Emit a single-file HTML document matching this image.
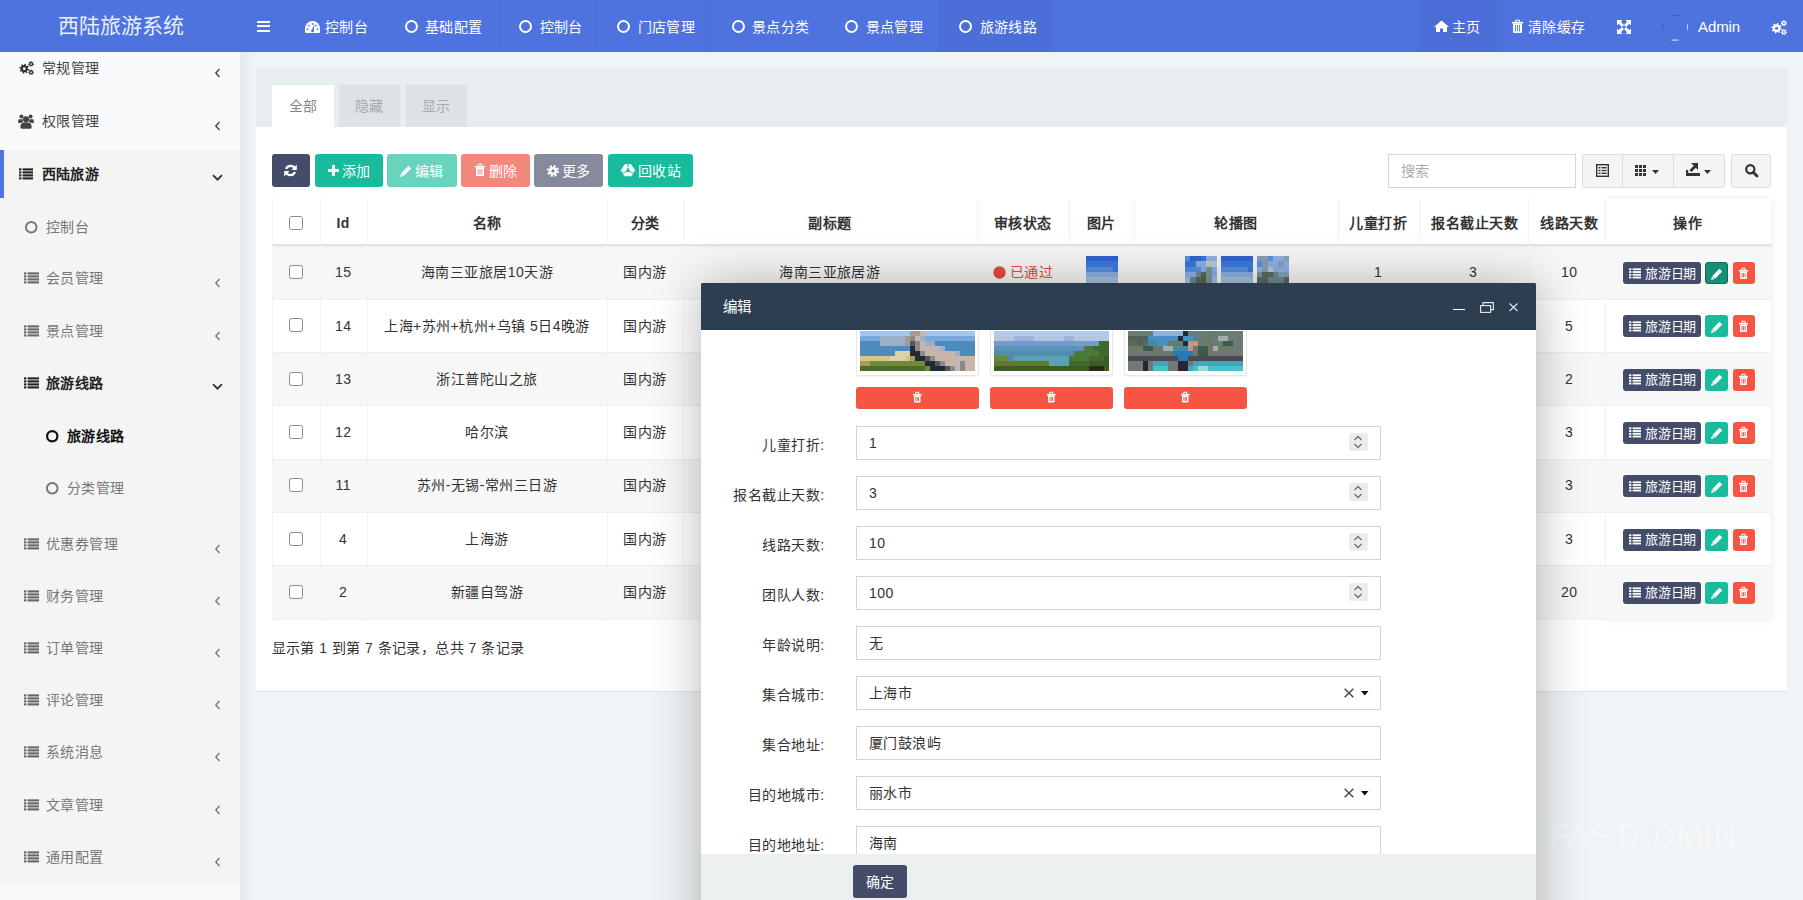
<!DOCTYPE html>
<html lang="zh-CN"><head><meta charset="utf-8">
<style>
*{box-sizing:border-box}
html,body{margin:0;padding:0}
body{width:1803px;height:900px;overflow:hidden;position:relative;background:#f1f4f6;font-family:"Liberation Sans",sans-serif;font-size:14.5px;color:#333}
.a{position:absolute}
.t{position:absolute;white-space:nowrap;letter-spacing:0.45px}
svg{position:absolute;display:block;overflow:visible}
</style></head><body>
<div class="a" style="left:0px;top:0px;width:1803.00px;height:52.00px;background:#4e73df"></div>
<div class="t" style="left:57.5px;top:13.3px;font-size:21px;line-height:25px;color:#e9eefb;font-weight:normal;letter-spacing:0.1px">西陆旅游系统</div>
<div class="a" style="left:257px;top:21px;width:13.00px;height:2.20px;background:#fff"></div>
<div class="a" style="left:257px;top:25.2px;width:13.00px;height:2.20px;background:#fff"></div>
<div class="a" style="left:257px;top:29.5px;width:13.00px;height:2.20px;background:#fff"></div>
<div class="a" style="left:939px;top:0px;width:113.00px;height:52.00px;background:rgba(0,0,0,.035)"></div>
<div class="a" style="left:385px;top:0px;width:1.00px;height:52.00px;background:rgba(0,0,0,.04)"></div>
<div class="a" style="left:500px;top:0px;width:1.00px;height:52.00px;background:rgba(0,0,0,.04)"></div>
<div class="a" style="left:596px;top:0px;width:1.00px;height:52.00px;background:rgba(0,0,0,.04)"></div>
<div class="a" style="left:711px;top:0px;width:1.00px;height:52.00px;background:rgba(0,0,0,.04)"></div>
<div class="a" style="left:825px;top:0px;width:1.00px;height:52.00px;background:rgba(0,0,0,.04)"></div>
<div class="a" style="left:939px;top:0px;width:1.00px;height:52.00px;background:rgba(0,0,0,.04)"></div>
<div class="a" style="left:1052px;top:0px;width:1.00px;height:52.00px;background:rgba(0,0,0,.04)"></div>
<svg style="left:304.7px;top:21.3px" width="15" height="12" viewBox="0 0 15 12"><path d="M0 11 L0 7.5 A7.5 7.5 0 0 1 15 7.5 L15 11 Q15 12 14 12 L1 12 Q0 12 0 11 Z" fill="#fff"/><path d="M6.6 9.6 L9.6 2.8 L8.6 10.2 Z" fill="#4e73df"/><circle cx="7.6" cy="9.8" r="1.5" fill="#4e73df"/><circle cx="2.6" cy="8.2" r="0.9" fill="#4e73df"/><circle cx="4" cy="4.6" r="0.9" fill="#4e73df"/><circle cx="7.5" cy="3" r="0.9" fill="#4e73df"/><circle cx="12.4" cy="8.2" r="0.9" fill="#4e73df"/><circle cx="11" cy="4.6" r="0.9" fill="#4e73df"/></svg>
<div class="t" style="left:325px;top:18.6px;font-size:14px;line-height:17px;color:#fff;font-weight:normal;">控制台</div>
<svg style="left:404.5px;top:20px" width="13" height="13" viewBox="0 0 13 13"><circle cx="6.5" cy="6.5" r="5.5" fill="none" stroke="#fff" stroke-width="2"/></svg>
<div class="t" style="left:425.0px;top:18.6px;font-size:14px;line-height:17px;color:#fff;font-weight:normal;">基础配置</div>
<svg style="left:519px;top:20px" width="13" height="13" viewBox="0 0 13 13"><circle cx="6.5" cy="6.5" r="5.5" fill="none" stroke="#fff" stroke-width="2"/></svg>
<div class="t" style="left:539.5px;top:18.6px;font-size:14px;line-height:17px;color:#fff;font-weight:normal;">控制台</div>
<svg style="left:617px;top:20px" width="13" height="13" viewBox="0 0 13 13"><circle cx="6.5" cy="6.5" r="5.5" fill="none" stroke="#fff" stroke-width="2"/></svg>
<div class="t" style="left:637.5px;top:18.6px;font-size:14px;line-height:17px;color:#fff;font-weight:normal;">门店管理</div>
<svg style="left:731.5px;top:20px" width="13" height="13" viewBox="0 0 13 13"><circle cx="6.5" cy="6.5" r="5.5" fill="none" stroke="#fff" stroke-width="2"/></svg>
<div class="t" style="left:752.0px;top:18.6px;font-size:14px;line-height:17px;color:#fff;font-weight:normal;">景点分类</div>
<svg style="left:845px;top:20px" width="13" height="13" viewBox="0 0 13 13"><circle cx="6.5" cy="6.5" r="5.5" fill="none" stroke="#fff" stroke-width="2"/></svg>
<div class="t" style="left:865.5px;top:18.6px;font-size:14px;line-height:17px;color:#fff;font-weight:normal;">景点管理</div>
<svg style="left:959px;top:20px" width="13" height="13" viewBox="0 0 13 13"><circle cx="6.5" cy="6.5" r="5.5" fill="none" stroke="#fff" stroke-width="2"/></svg>
<div class="t" style="left:979.5px;top:18.6px;font-size:14px;line-height:17px;color:#fff;font-weight:normal;">旅游线路</div>
<div class="a" style="left:1419px;top:0px;width:78.00px;height:52.00px;background:rgba(0,0,0,.045)"></div>
<svg style="left:1434px;top:20px" width="15" height="12" viewBox="0 0 15 12"><path d="M7.5 0.5 L15 7 L13 7 L13 12 L9 12 L9 8.5 L6 8.5 L6 12 L2 12 L2 7 L0 7 Z" fill="#fff"/></svg>
<div class="t" style="left:1452px;top:18.6px;font-size:14px;line-height:17px;color:#fff;font-weight:normal;">主页</div>
<svg style="left:1512px;top:20px" width="11" height="13" viewBox="0 0 11 13"><path d="M3.30 2 L3.96 0.3 L7.04 0.3 L7.70 2" fill="none" stroke="#fff" stroke-width="1.1"/><rect x="0" y="1.9" width="11" height="1.6" fill="#fff"/><path d="M1 3.5 L10 3.5 L10 12 Q10 13 9 13 L2 13 Q1 13 1 12 Z" fill="#fff"/><rect x="2.98" y="5" width="0.9" height="6.50" fill="#4e73df"/><rect x="5.05" y="5" width="0.9" height="6.50" fill="#4e73df"/><rect x="7.12" y="5" width="0.9" height="6.50" fill="#4e73df"/></svg>
<div class="t" style="left:1528px;top:18.6px;font-size:14px;line-height:17px;color:#fff;font-weight:normal;">清除缓存</div>
<svg style="left:1617px;top:20px" width="14" height="13" viewBox="0 0 14 13"><path d="M0 0 L5.5 0 L3.8 1.7 L7 4.9 L4.9 7 L1.7 3.8 L0 5.5 Z" fill="#fff"/><path d="M14 0 L14 5.5 L12.3 3.8 L9.1 7 L7 4.9 L10.2 1.7 L8.5 0 Z" fill="#fff"/><path d="M0 14 L0 8.5 L1.7 10.2 L4.9 7 L7 9.1 L3.8 12.3 L5.5 14 Z" fill="#fff"/><path d="M14 14 L8.5 14 L10.2 12.3 L7 9.1 L9.1 7 L12.3 10.2 L14 8.5 Z" fill="#fff"/></svg>
<svg style="left:1662px;top:14px" width="26" height="27" viewBox="0 0 26 27"><rect x="9.5" y="1" width="7" height="1" fill="#3d5cb8"/><rect x="9.5" y="25.5" width="7" height="1.2" fill="#c9d5f6"/><rect x="0.5" y="10" width="1" height="6" fill="#3d5cb8"/><rect x="25" y="10" width="1" height="6" fill="#b9c9f3"/></svg>
<div class="t" style="left:1698px;top:18.1px;font-size:15px;line-height:18px;color:#fff;font-weight:normal;letter-spacing:-0.1px">Admin</div>
<svg style="left:1771px;top:19.5px" width="16" height="15" viewBox="0 0 16 15"><path d="M9.50 8.20 L10.88 8.70 L10.57 10.03 L9.12 9.89 L8.36 10.96 L8.98 12.28 L7.82 13.01 L6.89 11.88 L5.60 12.10 L5.10 13.48 L3.77 13.17 L3.91 11.72 L2.84 10.96 L1.52 11.58 L0.79 10.42 L1.92 9.49 L1.70 8.20 L0.32 7.70 L0.63 6.37 L2.08 6.51 L2.84 5.44 L2.22 4.12 L3.38 3.39 L4.31 4.52 L5.60 4.30 L6.10 2.92 L7.43 3.23 L7.29 4.68 L8.36 5.44 L9.68 4.82 L10.41 5.98 L9.28 6.91 Z" fill="#fff"/><circle cx="5.60" cy="8.20" r="1.50" fill="#4e73df"/><path d="M15.10 3.20 L15.98 3.53 L15.75 4.42 L14.82 4.28 L14.27 4.92 L14.56 5.82 L13.72 6.19 L13.25 5.37 L12.41 5.34 L11.89 6.13 L11.08 5.71 L11.42 4.83 L10.92 4.15 L9.98 4.24 L9.80 3.34 L10.70 3.06 L10.92 2.25 L10.27 1.56 L10.86 0.87 L11.64 1.40 L12.41 1.06 L12.54 0.12 L13.45 0.15 L13.52 1.09 L14.27 1.48 L15.08 1.00 L15.63 1.73 L14.94 2.37 Z" fill="#fff"/><circle cx="12.90" cy="3.20" r="0.90" fill="#4e73df"/><path d="M15.10 12.00 L15.98 12.33 L15.75 13.22 L14.82 13.08 L14.27 13.72 L14.56 14.62 L13.72 14.99 L13.25 14.17 L12.41 14.14 L11.89 14.93 L11.08 14.51 L11.42 13.63 L10.92 12.95 L9.98 13.04 L9.80 12.14 L10.70 11.86 L10.92 11.05 L10.27 10.36 L10.86 9.67 L11.64 10.20 L12.41 9.86 L12.54 8.92 L13.45 8.95 L13.52 9.89 L14.27 10.28 L15.08 9.80 L15.63 10.53 L14.94 11.17 Z" fill="#fff"/><circle cx="12.90" cy="12.00" r="0.90" fill="#4e73df"/></svg>
<div class="a" style="left:0px;top:52px;width:240.00px;height:848.00px;background:#f9fafc"></div>
<div class="a" style="left:0px;top:150px;width:240.00px;height:735.00px;background:#f4f4f5"></div>
<div class="a" style="left:0px;top:150px;width:3.50px;height:48.00px;background:#4e73df"></div>
<svg style="left:18.5px;top:61px" width="15" height="14" viewBox="0 0 15 14"><path d="M8.91 7.69 L10.20 8.16 L9.91 9.41 L8.55 9.27 L7.84 10.27 L8.42 11.52 L7.33 12.20 L6.46 11.14 L5.25 11.34 L4.78 12.63 L3.53 12.35 L3.67 10.98 L2.66 10.27 L1.42 10.85 L0.74 9.77 L1.80 8.90 L1.59 7.69 L0.30 7.22 L0.59 5.97 L1.95 6.10 L2.66 5.10 L2.08 3.86 L3.17 3.18 L4.04 4.24 L5.25 4.03 L5.72 2.74 L6.97 3.03 L6.83 4.39 L7.84 5.10 L9.08 4.52 L9.76 5.61 L8.70 6.48 Z" fill="#333"/><circle cx="5.25" cy="7.69" r="1.41" fill="#f9fafc"/><path d="M14.16 3.00 L14.98 3.31 L14.77 4.14 L13.89 4.01 L13.38 4.61 L13.65 5.45 L12.87 5.80 L12.43 5.04 L11.63 5.01 L11.15 5.75 L10.39 5.35 L10.71 4.53 L10.24 3.89 L9.35 3.97 L9.19 3.13 L10.04 2.87 L10.24 2.11 L9.63 1.46 L10.18 0.81 L10.91 1.31 L11.63 0.99 L11.76 0.11 L12.61 0.14 L12.68 1.02 L13.38 1.39 L14.14 0.94 L14.65 1.62 L14.00 2.22 Z" fill="#333"/><circle cx="12.09" cy="3.00" r="0.84" fill="#f9fafc"/><path d="M14.16 11.25 L14.98 11.56 L14.77 12.39 L13.89 12.26 L13.38 12.86 L13.65 13.70 L12.87 14.05 L12.43 13.29 L11.63 13.26 L11.15 14.00 L10.39 13.60 L10.71 12.78 L10.24 12.14 L9.35 12.22 L9.19 11.38 L10.04 11.12 L10.24 10.36 L9.63 9.71 L10.18 9.06 L10.91 9.56 L11.63 9.24 L11.76 8.36 L12.61 8.39 L12.68 9.27 L13.38 9.64 L14.14 9.19 L14.65 9.87 L14.00 10.47 Z" fill="#333"/><circle cx="12.09" cy="11.25" r="0.84" fill="#f9fafc"/></svg>
<div class="t" style="left:42px;top:60.1px;font-size:14px;line-height:17px;color:#444;font-weight:normal;">常规管理</div>
<svg style="left:214px;top:68px" width="7" height="10" viewBox="0 0 7 10"><path d="M5.5 1 L1.8 5.0 L5.5 9" fill="none" stroke="#444" stroke-width="1.4"/></svg>
<svg style="left:18px;top:113.5px" width="16" height="15" viewBox="0 0 16 15"><circle cx="8" cy="5.3" r="3.1" fill="#444"/><path d="M2.4 13.2 Q2.4 8.6 6 8.6 L10 8.6 Q13.6 8.6 13.6 13.2 Q13.6 14.8 12 14.8 L4 14.8 Q2.4 14.8 2.4 13.2 Z" fill="#444"/><circle cx="3.4" cy="2.6" r="2" fill="#444"/><circle cx="12.6" cy="2.6" r="2" fill="#444"/><path d="M0.2 9 L0.2 6.4 Q0.2 5.3 1.3 5.3 L4.6 5.3 Q4.4 6.6 5.2 8 Q3.4 8.4 2.6 9 Z" fill="#444"/><path d="M15.8 9 L15.8 6.4 Q15.8 5.3 14.7 5.3 L11.4 5.3 Q11.6 6.6 10.8 8 Q12.6 8.4 13.4 9 Z" fill="#444"/></svg>
<div class="t" style="left:42px;top:113.1px;font-size:14px;line-height:17px;color:#444;font-weight:normal;">权限管理</div>
<svg style="left:214px;top:121px" width="7" height="10" viewBox="0 0 7 10"><path d="M5.5 1 L1.8 5.0 L5.5 9" fill="none" stroke="#444" stroke-width="1.4"/></svg>
<svg style="left:19px;top:168px" width="14" height="12" viewBox="0 0 14 12"><rect x="0" y="0.35" width="2.4" height="2.10" fill="#222"/><rect x="3.6" y="0.35" width="10.4" height="2.10" fill="#222"/><rect x="0" y="3.35" width="2.4" height="2.10" fill="#222"/><rect x="3.6" y="3.35" width="10.4" height="2.10" fill="#222"/><rect x="0" y="6.35" width="2.4" height="2.10" fill="#222"/><rect x="3.6" y="6.35" width="10.4" height="2.10" fill="#222"/><rect x="0" y="9.35" width="2.4" height="2.10" fill="#222"/><rect x="3.6" y="9.35" width="10.4" height="2.10" fill="#222"/></svg>
<div class="t" style="left:41.5px;top:166.1px;font-size:14px;line-height:17px;color:#222;font-weight:bold;">西陆旅游</div>
<svg style="left:212px;top:174px" width="11" height="7" viewBox="0 0 11 7"><path d="M1 1.2 L5.5 5.7 L10 1.2" fill="none" stroke="#333" stroke-width="1.8"/></svg>
<svg style="left:25px;top:221px" width="12.5" height="12.5" viewBox="0 0 12.5 12.5"><circle cx="6.25" cy="6.25" r="5.3" fill="none" stroke="#777" stroke-width="1.9"/></svg>
<div class="t" style="left:46px;top:218.6px;font-size:14px;line-height:17px;color:#777;font-weight:normal;">控制台</div>
<svg style="left:24px;top:272px" width="15" height="12" viewBox="0 0 15 12"><rect x="0" y="0.35" width="2.4" height="2.10" fill="#666"/><rect x="3.6" y="0.35" width="11.4" height="2.10" fill="#666"/><rect x="0" y="3.35" width="2.4" height="2.10" fill="#666"/><rect x="3.6" y="3.35" width="11.4" height="2.10" fill="#666"/><rect x="0" y="6.35" width="2.4" height="2.10" fill="#666"/><rect x="3.6" y="6.35" width="11.4" height="2.10" fill="#666"/><rect x="0" y="9.35" width="2.4" height="2.10" fill="#666"/><rect x="3.6" y="9.35" width="11.4" height="2.10" fill="#666"/></svg>
<div class="t" style="left:46px;top:270.1px;font-size:14px;line-height:17px;color:#777;font-weight:normal;">会员管理</div>
<svg style="left:214px;top:278px" width="7" height="10" viewBox="0 0 7 10"><path d="M5.5 1 L1.8 5.0 L5.5 9" fill="none" stroke="#777" stroke-width="1.4"/></svg>
<svg style="left:24px;top:324.5px" width="15" height="12" viewBox="0 0 15 12"><rect x="0" y="0.35" width="2.4" height="2.10" fill="#666"/><rect x="3.6" y="0.35" width="11.4" height="2.10" fill="#666"/><rect x="0" y="3.35" width="2.4" height="2.10" fill="#666"/><rect x="3.6" y="3.35" width="11.4" height="2.10" fill="#666"/><rect x="0" y="6.35" width="2.4" height="2.10" fill="#666"/><rect x="3.6" y="6.35" width="11.4" height="2.10" fill="#666"/><rect x="0" y="9.35" width="2.4" height="2.10" fill="#666"/><rect x="3.6" y="9.35" width="11.4" height="2.10" fill="#666"/></svg>
<div class="t" style="left:46px;top:322.6px;font-size:14px;line-height:17px;color:#777;font-weight:normal;">景点管理</div>
<svg style="left:214px;top:330.5px" width="7" height="10" viewBox="0 0 7 10"><path d="M5.5 1 L1.8 5.0 L5.5 9" fill="none" stroke="#777" stroke-width="1.4"/></svg>
<svg style="left:24px;top:377px" width="15" height="12" viewBox="0 0 15 12"><rect x="0" y="0.35" width="2.4" height="2.10" fill="#222"/><rect x="3.6" y="0.35" width="11.4" height="2.10" fill="#222"/><rect x="0" y="3.35" width="2.4" height="2.10" fill="#222"/><rect x="3.6" y="3.35" width="11.4" height="2.10" fill="#222"/><rect x="0" y="6.35" width="2.4" height="2.10" fill="#222"/><rect x="3.6" y="6.35" width="11.4" height="2.10" fill="#222"/><rect x="0" y="9.35" width="2.4" height="2.10" fill="#222"/><rect x="3.6" y="9.35" width="11.4" height="2.10" fill="#222"/></svg>
<div class="t" style="left:46px;top:375.1px;font-size:14px;line-height:17px;color:#222;font-weight:bold;">旅游线路</div>
<svg style="left:212px;top:383px" width="11" height="7" viewBox="0 0 11 7"><path d="M1 1.2 L5.5 5.7 L10 1.2" fill="none" stroke="#333" stroke-width="1.8"/></svg>
<svg style="left:46px;top:429.5px" width="12.5" height="12.5" viewBox="0 0 12.5 12.5"><circle cx="6.25" cy="6.25" r="5.15" fill="none" stroke="#111" stroke-width="2.2"/></svg>
<div class="t" style="left:67px;top:427.6px;font-size:14px;line-height:17px;color:#111;font-weight:bold;">旅游线路</div>
<svg style="left:46px;top:481.5px" width="12.5" height="12.5" viewBox="0 0 12.5 12.5"><circle cx="6.25" cy="6.25" r="5.3" fill="none" stroke="#777" stroke-width="1.9"/></svg>
<div class="t" style="left:67px;top:479.6px;font-size:14px;line-height:17px;color:#777;font-weight:normal;">分类管理</div>
<svg style="left:24px;top:537.5px" width="15" height="12" viewBox="0 0 15 12"><rect x="0" y="0.35" width="2.4" height="2.10" fill="#666"/><rect x="3.6" y="0.35" width="11.4" height="2.10" fill="#666"/><rect x="0" y="3.35" width="2.4" height="2.10" fill="#666"/><rect x="3.6" y="3.35" width="11.4" height="2.10" fill="#666"/><rect x="0" y="6.35" width="2.4" height="2.10" fill="#666"/><rect x="3.6" y="6.35" width="11.4" height="2.10" fill="#666"/><rect x="0" y="9.35" width="2.4" height="2.10" fill="#666"/><rect x="3.6" y="9.35" width="11.4" height="2.10" fill="#666"/></svg>
<div class="t" style="left:46px;top:535.6px;font-size:14px;line-height:17px;color:#777;font-weight:normal;">优惠券管理</div>
<svg style="left:214px;top:543.5px" width="7" height="10" viewBox="0 0 7 10"><path d="M5.5 1 L1.8 5.0 L5.5 9" fill="none" stroke="#777" stroke-width="1.4"/></svg>
<svg style="left:24px;top:589.5px" width="15" height="12" viewBox="0 0 15 12"><rect x="0" y="0.35" width="2.4" height="2.10" fill="#666"/><rect x="3.6" y="0.35" width="11.4" height="2.10" fill="#666"/><rect x="0" y="3.35" width="2.4" height="2.10" fill="#666"/><rect x="3.6" y="3.35" width="11.4" height="2.10" fill="#666"/><rect x="0" y="6.35" width="2.4" height="2.10" fill="#666"/><rect x="3.6" y="6.35" width="11.4" height="2.10" fill="#666"/><rect x="0" y="9.35" width="2.4" height="2.10" fill="#666"/><rect x="3.6" y="9.35" width="11.4" height="2.10" fill="#666"/></svg>
<div class="t" style="left:46px;top:587.6px;font-size:14px;line-height:17px;color:#777;font-weight:normal;">财务管理</div>
<svg style="left:214px;top:595.5px" width="7" height="10" viewBox="0 0 7 10"><path d="M5.5 1 L1.8 5.0 L5.5 9" fill="none" stroke="#777" stroke-width="1.4"/></svg>
<svg style="left:24px;top:641.5px" width="15" height="12" viewBox="0 0 15 12"><rect x="0" y="0.35" width="2.4" height="2.10" fill="#666"/><rect x="3.6" y="0.35" width="11.4" height="2.10" fill="#666"/><rect x="0" y="3.35" width="2.4" height="2.10" fill="#666"/><rect x="3.6" y="3.35" width="11.4" height="2.10" fill="#666"/><rect x="0" y="6.35" width="2.4" height="2.10" fill="#666"/><rect x="3.6" y="6.35" width="11.4" height="2.10" fill="#666"/><rect x="0" y="9.35" width="2.4" height="2.10" fill="#666"/><rect x="3.6" y="9.35" width="11.4" height="2.10" fill="#666"/></svg>
<div class="t" style="left:46px;top:639.6px;font-size:14px;line-height:17px;color:#777;font-weight:normal;">订单管理</div>
<svg style="left:214px;top:647.5px" width="7" height="10" viewBox="0 0 7 10"><path d="M5.5 1 L1.8 5.0 L5.5 9" fill="none" stroke="#777" stroke-width="1.4"/></svg>
<svg style="left:24px;top:694px" width="15" height="12" viewBox="0 0 15 12"><rect x="0" y="0.35" width="2.4" height="2.10" fill="#666"/><rect x="3.6" y="0.35" width="11.4" height="2.10" fill="#666"/><rect x="0" y="3.35" width="2.4" height="2.10" fill="#666"/><rect x="3.6" y="3.35" width="11.4" height="2.10" fill="#666"/><rect x="0" y="6.35" width="2.4" height="2.10" fill="#666"/><rect x="3.6" y="6.35" width="11.4" height="2.10" fill="#666"/><rect x="0" y="9.35" width="2.4" height="2.10" fill="#666"/><rect x="3.6" y="9.35" width="11.4" height="2.10" fill="#666"/></svg>
<div class="t" style="left:46px;top:692.1px;font-size:14px;line-height:17px;color:#777;font-weight:normal;">评论管理</div>
<svg style="left:214px;top:700px" width="7" height="10" viewBox="0 0 7 10"><path d="M5.5 1 L1.8 5.0 L5.5 9" fill="none" stroke="#777" stroke-width="1.4"/></svg>
<svg style="left:24px;top:746px" width="15" height="12" viewBox="0 0 15 12"><rect x="0" y="0.35" width="2.4" height="2.10" fill="#666"/><rect x="3.6" y="0.35" width="11.4" height="2.10" fill="#666"/><rect x="0" y="3.35" width="2.4" height="2.10" fill="#666"/><rect x="3.6" y="3.35" width="11.4" height="2.10" fill="#666"/><rect x="0" y="6.35" width="2.4" height="2.10" fill="#666"/><rect x="3.6" y="6.35" width="11.4" height="2.10" fill="#666"/><rect x="0" y="9.35" width="2.4" height="2.10" fill="#666"/><rect x="3.6" y="9.35" width="11.4" height="2.10" fill="#666"/></svg>
<div class="t" style="left:46px;top:744.1px;font-size:14px;line-height:17px;color:#777;font-weight:normal;">系统消息</div>
<svg style="left:214px;top:752px" width="7" height="10" viewBox="0 0 7 10"><path d="M5.5 1 L1.8 5.0 L5.5 9" fill="none" stroke="#777" stroke-width="1.4"/></svg>
<svg style="left:24px;top:798.5px" width="15" height="12" viewBox="0 0 15 12"><rect x="0" y="0.35" width="2.4" height="2.10" fill="#666"/><rect x="3.6" y="0.35" width="11.4" height="2.10" fill="#666"/><rect x="0" y="3.35" width="2.4" height="2.10" fill="#666"/><rect x="3.6" y="3.35" width="11.4" height="2.10" fill="#666"/><rect x="0" y="6.35" width="2.4" height="2.10" fill="#666"/><rect x="3.6" y="6.35" width="11.4" height="2.10" fill="#666"/><rect x="0" y="9.35" width="2.4" height="2.10" fill="#666"/><rect x="3.6" y="9.35" width="11.4" height="2.10" fill="#666"/></svg>
<div class="t" style="left:46px;top:796.6px;font-size:14px;line-height:17px;color:#777;font-weight:normal;">文章管理</div>
<svg style="left:214px;top:804.5px" width="7" height="10" viewBox="0 0 7 10"><path d="M5.5 1 L1.8 5.0 L5.5 9" fill="none" stroke="#777" stroke-width="1.4"/></svg>
<svg style="left:24px;top:850.5px" width="15" height="12" viewBox="0 0 15 12"><rect x="0" y="0.35" width="2.4" height="2.10" fill="#666"/><rect x="3.6" y="0.35" width="11.4" height="2.10" fill="#666"/><rect x="0" y="3.35" width="2.4" height="2.10" fill="#666"/><rect x="3.6" y="3.35" width="11.4" height="2.10" fill="#666"/><rect x="0" y="6.35" width="2.4" height="2.10" fill="#666"/><rect x="3.6" y="6.35" width="11.4" height="2.10" fill="#666"/><rect x="0" y="9.35" width="2.4" height="2.10" fill="#666"/><rect x="3.6" y="9.35" width="11.4" height="2.10" fill="#666"/></svg>
<div class="t" style="left:46px;top:848.6px;font-size:14px;line-height:17px;color:#777;font-weight:normal;">通用配置</div>
<svg style="left:214px;top:856.5px" width="7" height="10" viewBox="0 0 7 10"><path d="M5.5 1 L1.8 5.0 L5.5 9" fill="none" stroke="#777" stroke-width="1.4"/></svg>
<div class="a" style="left:240px;top:52px;width:12.00px;height:848.00px;background:linear-gradient(90deg,#e6eaee,#edf0f4)"></div>
<div class="a" style="left:256px;top:67px;width:1531.00px;height:624.00px;background:#fff;box-shadow:0 1px 1px rgba(0,0,0,.06)"></div>
<div class="a" style="left:256px;top:67px;width:1531.00px;height:60.00px;background:#e8edf0"></div>
<div class="a" style="left:272px;top:85px;width:62.00px;height:43.00px;background:#fff"></div>
<div class="a" style="left:339px;top:85px;width:61.00px;height:42.00px;background:#dde2e7"></div>
<div class="a" style="left:406px;top:85px;width:61.00px;height:42.00px;background:#dde2e7"></div>
<div class="t" style="left:273.0px;width:60px;text-align:center;top:98.1px;font-size:14px;line-height:17px;color:#888;font-weight:normal">全部</div>
<div class="t" style="left:339.5px;width:60px;text-align:center;top:98.1px;font-size:14px;line-height:17px;color:#a5abb2;font-weight:normal">隐藏</div>
<div class="t" style="left:406.5px;width:60px;text-align:center;top:98.1px;font-size:14px;line-height:17px;color:#a5abb2;font-weight:normal">显示</div>
<div class="a" style="left:271.5px;top:153.5px;width:38.50px;height:33.50px;background:#444c69;border-radius:3px"></div>
<svg style="left:284px;top:163.5px" width="13" height="13" viewBox="0 0 13 13"><path d="M11 4.5 A5 5 0 0 0 2 5" fill="none" stroke="#fff" stroke-width="2.2"/><path d="M12.8 0.5 L12.8 6 L7.5 6 Z" fill="#fff"/><path d="M2 8.5 A5 5 0 0 0 11 8" fill="none" stroke="#fff" stroke-width="2.2"/><path d="M0.2 12.5 L0.2 7 L5.5 7 Z" fill="#fff"/></svg>
<div class="a" style="left:314.5px;top:153.5px;width:68.50px;height:33.50px;background:#18bc9c;border-radius:3px"></div>
<svg style="left:327.5px;top:165px" width="11" height="11" viewBox="0 0 11 11"><rect x="0" y="4.0" width="11" height="3" fill="#fff"/><rect x="4.0" y="0" width="3" height="11" fill="#fff"/></svg>
<div class="t" style="left:342px;top:162.6px;font-size:14px;line-height:17px;color:#fff;font-weight:normal;">添加</div>
<div class="a" style="left:387px;top:153.5px;width:70.00px;height:33.50px;background:#69d3be;border-radius:3px"></div>
<svg style="left:400px;top:164.5px" width="12" height="12" viewBox="0 0 12 12"><path d="M8.5 0.8 L11.2 3.5 L4 10.7 L1.3 8 Z" fill="#fff"/><path d="M1 8.6 L3.4 11 L0 12 Z" fill="#fff"/></svg>
<div class="t" style="left:415px;top:162.6px;font-size:14px;line-height:17px;color:#fff;font-weight:normal;">编辑</div>
<div class="a" style="left:461px;top:153.5px;width:69.00px;height:33.50px;background:#f3887c;border-radius:3px"></div>
<svg style="left:474.5px;top:164px" width="10" height="12" viewBox="0 0 10 12"><path d="M3.00 2 L3.60 0.3 L6.40 0.3 L7.00 2" fill="none" stroke="#fff" stroke-width="1.1"/><rect x="0" y="1.9" width="10" height="1.6" fill="#fff"/><path d="M1 3.5 L9 3.5 L9 11 Q9 12 8 12 L2 12 Q1 12 1 11 Z" fill="#fff"/><rect x="2.76" y="5" width="0.9" height="5.50" fill="#f3887c"/><rect x="4.55" y="5" width="0.9" height="5.50" fill="#f3887c"/><rect x="6.34" y="5" width="0.9" height="5.50" fill="#f3887c"/></svg>
<div class="t" style="left:489px;top:162.6px;font-size:14px;line-height:17px;color:#fff;font-weight:normal;">删除</div>
<div class="a" style="left:533.5px;top:153.5px;width:69.50px;height:33.50px;background:#858b9d;border-radius:3px"></div>
<svg style="left:547px;top:164.5px" width="12" height="12" viewBox="0 0 12 12"><circle cx="6" cy="6" r="4.6" fill="none" stroke="#fff" stroke-width="2.8" stroke-dasharray="2 1.6"/><circle cx="6" cy="6" r="4" fill="#fff"/><circle cx="6" cy="6" r="1.7" fill="#858b9d"/></svg>
<div class="t" style="left:562px;top:162.6px;font-size:14px;line-height:17px;color:#fff;font-weight:normal;">更多</div>
<div class="a" style="left:608px;top:153.5px;width:84.50px;height:33.50px;background:#18bc9c;border-radius:3px"></div>
<svg style="left:620.7px;top:164.3px" width="14" height="12" viewBox="0 0 14 12"><path d="M4 0.6 L10 0.6 L13.6 6.2 L10.4 11.8 L3.6 11.8 L0.4 6.2 Z" fill="#fff" stroke="#fff" stroke-width="0.9" stroke-linejoin="round"/><path d="M7 3.2 L9.6 8 L4.4 8 Z" fill="#18bc9c"/><path d="M7 0 L7 3.4 M0.6 9.8 L4.6 7.8 M13.4 9.8 L9.4 7.8" stroke="#18bc9c" stroke-width="1"/></svg>
<div class="t" style="left:638px;top:162.6px;font-size:14px;line-height:17px;color:#fff;font-weight:normal;">回收站</div>
<div class="a" style="left:1387.5px;top:153.5px;width:188.50px;height:34.50px;background:#fff;border:1px solid #d6d6d6"></div>
<div class="t" style="left:1401px;top:163.1px;font-size:14px;line-height:17px;color:#aaa;font-weight:normal;">搜索</div>
<div class="a" style="left:1582px;top:153.5px;width:143.00px;height:34.50px;background:#f4f4f4;border:1px solid #ddd;border-radius:3px"></div>
<div class="a" style="left:1622px;top:154px;width:1.00px;height:33.50px;background:#ddd"></div>
<div class="a" style="left:1673px;top:154px;width:1.00px;height:33.50px;background:#ddd"></div>
<div class="a" style="left:1731px;top:153.5px;width:40.00px;height:34.50px;background:#f4f4f4;border:1px solid #ddd;border-radius:3px"></div>
<svg style="left:1596px;top:164px" width="13" height="13" viewBox="0 0 13 13"><rect x="0.7" y="0.7" width="11.6" height="11.6" fill="none" stroke="#333" stroke-width="1.4"/><rect x="2.5" y="3" width="2" height="1.4" fill="#333"/><rect x="5.5" y="3" width="5" height="1.4" fill="#333"/><rect x="2.5" y="5.8" width="2" height="1.4" fill="#333"/><rect x="5.5" y="5.8" width="5" height="1.4" fill="#333"/><rect x="2.5" y="8.6" width="2" height="1.4" fill="#333"/><rect x="5.5" y="8.6" width="5" height="1.4" fill="#333"/></svg>
<svg style="left:1635px;top:165px" width="11" height="11" viewBox="0 0 11 11"><rect x="0" y="0" width="3" height="3" fill="#333"/><rect x="0" y="4" width="3" height="3" fill="#333"/><rect x="0" y="8" width="3" height="3" fill="#333"/><rect x="4" y="0" width="3" height="3" fill="#333"/><rect x="4" y="4" width="3" height="3" fill="#333"/><rect x="4" y="8" width="3" height="3" fill="#333"/><rect x="8" y="0" width="3" height="3" fill="#333"/><rect x="8" y="4" width="3" height="3" fill="#333"/><rect x="8" y="8" width="3" height="3" fill="#333"/></svg>
<svg style="left:1652px;top:170px" width="7" height="4" viewBox="0 0 7 4"><path d="M0 0 L7 0 L3.5 4 Z" fill="#333"/></svg>
<svg style="left:1686px;top:162px" width="15" height="15" viewBox="0 0 15 15"><path d="M5 1 L12 1 L12 8 L9.8 5.8 L5.5 10 L3.5 8 L7.8 3.8 Z" fill="#333"/><rect x="0" y="11" width="14" height="3" fill="#333"/><rect x="0" y="8" width="2.2" height="4" fill="#333"/></svg>
<svg style="left:1704px;top:170px" width="7" height="4" viewBox="0 0 7 4"><path d="M0 0 L7 0 L3.5 4 Z" fill="#333"/></svg>
<svg style="left:1744.5px;top:164px" width="13" height="13" viewBox="0 0 13 13"><circle cx="5.3" cy="5.3" r="4.1" fill="none" stroke="#333" stroke-width="2.2"/><path d="M8.3 8.3 L12 12" stroke="#333" stroke-width="2.8" stroke-linecap="round"/></svg>
<div class="a" style="left:1604.5px;top:199px;width:166.50px;height:419.60px;box-shadow:0 0 9px rgba(0,0,0,.09);border-radius:3px;background:#fff"></div>
<div class="a" style="left:271.5px;top:199px;width:1499.50px;height:46.50px;background:#fff"></div>
<div class="a" style="left:271.5px;top:245.5px;width:1499.50px;height:53.30px;background:#f7f7f7"></div>
<div class="a" style="left:271.5px;top:245.5px;width:1499.50px;height:1.00px;background:#eee"></div>
<div class="a" style="left:271.5px;top:298.8px;width:1499.50px;height:53.30px;background:#fff"></div>
<div class="a" style="left:271.5px;top:298.8px;width:1499.50px;height:1.00px;background:#eee"></div>
<div class="a" style="left:271.5px;top:352.1px;width:1499.50px;height:53.30px;background:#f7f7f7"></div>
<div class="a" style="left:271.5px;top:352.1px;width:1499.50px;height:1.00px;background:#eee"></div>
<div class="a" style="left:271.5px;top:405.4px;width:1499.50px;height:53.30px;background:#fff"></div>
<div class="a" style="left:271.5px;top:405.4px;width:1499.50px;height:1.00px;background:#eee"></div>
<div class="a" style="left:271.5px;top:458.7px;width:1499.50px;height:53.30px;background:#f7f7f7"></div>
<div class="a" style="left:271.5px;top:458.7px;width:1499.50px;height:1.00px;background:#eee"></div>
<div class="a" style="left:271.5px;top:512.0px;width:1499.50px;height:53.30px;background:#fff"></div>
<div class="a" style="left:271.5px;top:512.0px;width:1499.50px;height:1.00px;background:#eee"></div>
<div class="a" style="left:271.5px;top:565.3px;width:1499.50px;height:53.30px;background:#f7f7f7"></div>
<div class="a" style="left:271.5px;top:565.3px;width:1499.50px;height:1.00px;background:#eee"></div>
<div class="a" style="left:271.5px;top:244.0px;width:1499.50px;height:2.00px;background:#e4e4e4"></div>
<div class="a" style="left:271.5px;top:618.5999999999999px;width:1499.50px;height:1.00px;background:#f0f0f0"></div>
<div class="a" style="left:271.5px;top:199px;width:1.00px;height:419.60px;background:#f2f2f2"></div>
<div class="a" style="left:319.5px;top:199px;width:1.00px;height:419.60px;background:#f2f2f2"></div>
<div class="a" style="left:367px;top:199px;width:1.00px;height:419.60px;background:#f2f2f2"></div>
<div class="a" style="left:607px;top:199px;width:1.00px;height:419.60px;background:#f2f2f2"></div>
<div class="a" style="left:683px;top:199px;width:1.00px;height:419.60px;background:#f2f2f2"></div>
<div class="a" style="left:976.5px;top:199px;width:1.00px;height:419.60px;background:#f2f2f2"></div>
<div class="a" style="left:1069px;top:199px;width:1.00px;height:419.60px;background:#f2f2f2"></div>
<div class="a" style="left:1133.5px;top:199px;width:1.00px;height:419.60px;background:#f2f2f2"></div>
<div class="a" style="left:1338px;top:199px;width:1.00px;height:419.60px;background:#f2f2f2"></div>
<div class="a" style="left:1418.5px;top:199px;width:1.00px;height:419.60px;background:#f2f2f2"></div>
<div class="a" style="left:1528px;top:199px;width:1.00px;height:419.60px;background:#f2f2f2"></div>
<div class="a" style="left:1604.5px;top:199px;width:1.00px;height:419.60px;background:#f2f2f2"></div>
<div class="t" style="left:243.2px;width:200px;text-align:center;top:214.6px;font-size:14px;line-height:17px;color:#333;font-weight:bold">Id</div>
<div class="t" style="left:387.0px;width:200px;text-align:center;top:214.6px;font-size:14px;line-height:17px;color:#333;font-weight:bold">名称</div>
<div class="t" style="left:545.0px;width:200px;text-align:center;top:214.6px;font-size:14px;line-height:17px;color:#333;font-weight:bold">分类</div>
<div class="t" style="left:729.8px;width:200px;text-align:center;top:214.6px;font-size:14px;line-height:17px;color:#333;font-weight:bold">副标题</div>
<div class="t" style="left:922.8px;width:200px;text-align:center;top:214.6px;font-size:14px;line-height:17px;color:#333;font-weight:bold">审核状态</div>
<div class="t" style="left:1001.2px;width:200px;text-align:center;top:214.6px;font-size:14px;line-height:17px;color:#333;font-weight:bold">图片</div>
<div class="t" style="left:1135.8px;width:200px;text-align:center;top:214.6px;font-size:14px;line-height:17px;color:#333;font-weight:bold">轮播图</div>
<div class="t" style="left:1278.2px;width:200px;text-align:center;top:214.6px;font-size:14px;line-height:17px;color:#333;font-weight:bold">儿童打折</div>
<div class="t" style="left:1374.8px;width:200px;text-align:center;top:214.6px;font-size:14px;line-height:17px;color:#333;font-weight:bold">报名截止天数</div>
<div class="t" style="left:1469.2px;width:200px;text-align:center;top:214.6px;font-size:14px;line-height:17px;color:#333;font-weight:bold">线路天数</div>
<div class="t" style="left:1587.8px;width:200px;text-align:center;top:214.6px;font-size:14px;line-height:17px;color:#333;font-weight:bold">操作</div>
<div class="a" style="left:288.5px;top:215.5px;width:14.00px;height:14.00px;border:1.8px solid #8c8c8c;border-radius:2.5px;background:#fff"></div>
<div class="a" style="left:288.5px;top:265.15px;width:14.00px;height:14.00px;border:1.8px solid #8c8c8c;border-radius:2.5px;background:#fff"></div>
<div class="t" style="left:303.2px;width:80px;text-align:center;top:264.2px;font-size:14px;line-height:17px;color:#333;font-weight:normal">15</div>
<div class="t" style="left:367.0px;width:240px;text-align:center;top:264.2px;font-size:14px;line-height:17px;color:#333;font-weight:normal">海南三亚旅居10天游</div>
<div class="t" style="left:605.0px;width:80px;text-align:center;top:264.2px;font-size:14px;line-height:17px;color:#333;font-weight:normal">国内游</div>
<div class="t" style="left:1529.2px;width:80px;text-align:center;top:264.2px;font-size:14px;line-height:17px;color:#333;font-weight:normal">10</div>
<div class="a" style="left:1622.5px;top:262.0px;width:78.50px;height:22.00px;background:#444c69;border-radius:3px"></div>
<svg style="left:1629px;top:267.5px" width="12" height="11" viewBox="0 0 12 11"><rect x="0" y="0.35" width="2.4" height="1.85" fill="#fff"/><rect x="3.6" y="0.35" width="8.4" height="1.85" fill="#fff"/><rect x="0" y="3.10" width="2.4" height="1.85" fill="#fff"/><rect x="3.6" y="3.10" width="8.4" height="1.85" fill="#fff"/><rect x="0" y="5.85" width="2.4" height="1.85" fill="#fff"/><rect x="3.6" y="5.85" width="8.4" height="1.85" fill="#fff"/><rect x="0" y="8.60" width="2.4" height="1.85" fill="#fff"/><rect x="3.6" y="8.60" width="8.4" height="1.85" fill="#fff"/></svg>
<div class="t" style="left:1645px;top:265.6px;font-size:13px;line-height:16px;color:#fff;font-weight:normal;letter-spacing:-0.2px">旅游日期</div>
<div class="a" style="left:1705px;top:262.0px;width:23.00px;height:22.00px;background:#158f76;border:1px solid #0f6e5a;border-radius:3px"></div>
<svg style="left:1711px;top:267.5px" width="11" height="11" viewBox="0 0 11 11"><path d="M8.5 0.8 L11.2 3.5 L4 10.7 L1.3 8 Z" fill="#fff"/><path d="M1 8.6 L3.4 11 L0 12 Z" fill="#fff"/></svg>
<div class="a" style="left:1732.5px;top:262.0px;width:22.50px;height:22.00px;background:#f75444;border-radius:3px"></div>
<svg style="left:1739px;top:267.5px" width="9" height="11" viewBox="0 0 9 11"><path d="M2.70 2 L3.24 0.3 L5.76 0.3 L6.30 2" fill="none" stroke="#fff" stroke-width="1.1"/><rect x="0" y="1.9" width="9" height="1.6" fill="#fff"/><path d="M1 3.5 L8 3.5 L8 10 Q8 11 7 11 L2 11 Q1 11 1 10 Z" fill="#fff"/><rect x="2.54" y="5" width="0.9" height="4.50" fill="#f75444"/><rect x="4.05" y="5" width="0.9" height="4.50" fill="#f75444"/><rect x="5.56" y="5" width="0.9" height="4.50" fill="#f75444"/></svg>
<div class="a" style="left:288.5px;top:318.45px;width:14.00px;height:14.00px;border:1.8px solid #8c8c8c;border-radius:2.5px;background:#fff"></div>
<div class="t" style="left:303.2px;width:80px;text-align:center;top:317.6px;font-size:14px;line-height:17px;color:#333;font-weight:normal">14</div>
<div class="t" style="left:367.0px;width:240px;text-align:center;top:317.6px;font-size:14px;line-height:17px;color:#333;font-weight:normal">上海+苏州+杭州+乌镇 5日4晚游</div>
<div class="t" style="left:605.0px;width:80px;text-align:center;top:317.6px;font-size:14px;line-height:17px;color:#333;font-weight:normal">国内游</div>
<div class="t" style="left:1529.2px;width:80px;text-align:center;top:317.6px;font-size:14px;line-height:17px;color:#333;font-weight:normal">5</div>
<div class="a" style="left:1622.5px;top:315.3px;width:78.50px;height:22.00px;background:#444c69;border-radius:3px"></div>
<svg style="left:1629px;top:320.8px" width="12" height="11" viewBox="0 0 12 11"><rect x="0" y="0.35" width="2.4" height="1.85" fill="#fff"/><rect x="3.6" y="0.35" width="8.4" height="1.85" fill="#fff"/><rect x="0" y="3.10" width="2.4" height="1.85" fill="#fff"/><rect x="3.6" y="3.10" width="8.4" height="1.85" fill="#fff"/><rect x="0" y="5.85" width="2.4" height="1.85" fill="#fff"/><rect x="3.6" y="5.85" width="8.4" height="1.85" fill="#fff"/><rect x="0" y="8.60" width="2.4" height="1.85" fill="#fff"/><rect x="3.6" y="8.60" width="8.4" height="1.85" fill="#fff"/></svg>
<div class="t" style="left:1645px;top:318.9px;font-size:13px;line-height:16px;color:#fff;font-weight:normal;letter-spacing:-0.2px">旅游日期</div>
<div class="a" style="left:1705px;top:315.3px;width:23.00px;height:22.00px;background:#18bc9c;border-radius:3px"></div>
<svg style="left:1711px;top:320.8px" width="11" height="11" viewBox="0 0 11 11"><path d="M8.5 0.8 L11.2 3.5 L4 10.7 L1.3 8 Z" fill="#fff"/><path d="M1 8.6 L3.4 11 L0 12 Z" fill="#fff"/></svg>
<div class="a" style="left:1732.5px;top:315.3px;width:22.50px;height:22.00px;background:#f75444;border-radius:3px"></div>
<svg style="left:1739px;top:320.8px" width="9" height="11" viewBox="0 0 9 11"><path d="M2.70 2 L3.24 0.3 L5.76 0.3 L6.30 2" fill="none" stroke="#fff" stroke-width="1.1"/><rect x="0" y="1.9" width="9" height="1.6" fill="#fff"/><path d="M1 3.5 L8 3.5 L8 10 Q8 11 7 11 L2 11 Q1 11 1 10 Z" fill="#fff"/><rect x="2.54" y="5" width="0.9" height="4.50" fill="#f75444"/><rect x="4.05" y="5" width="0.9" height="4.50" fill="#f75444"/><rect x="5.56" y="5" width="0.9" height="4.50" fill="#f75444"/></svg>
<div class="a" style="left:288.5px;top:371.75px;width:14.00px;height:14.00px;border:1.8px solid #8c8c8c;border-radius:2.5px;background:#fff"></div>
<div class="t" style="left:303.2px;width:80px;text-align:center;top:370.9px;font-size:14px;line-height:17px;color:#333;font-weight:normal">13</div>
<div class="t" style="left:367.0px;width:240px;text-align:center;top:370.9px;font-size:14px;line-height:17px;color:#333;font-weight:normal">浙江普陀山之旅</div>
<div class="t" style="left:605.0px;width:80px;text-align:center;top:370.9px;font-size:14px;line-height:17px;color:#333;font-weight:normal">国内游</div>
<div class="t" style="left:1529.2px;width:80px;text-align:center;top:370.9px;font-size:14px;line-height:17px;color:#333;font-weight:normal">2</div>
<div class="a" style="left:1622.5px;top:368.6px;width:78.50px;height:22.00px;background:#444c69;border-radius:3px"></div>
<svg style="left:1629px;top:374.1px" width="12" height="11" viewBox="0 0 12 11"><rect x="0" y="0.35" width="2.4" height="1.85" fill="#fff"/><rect x="3.6" y="0.35" width="8.4" height="1.85" fill="#fff"/><rect x="0" y="3.10" width="2.4" height="1.85" fill="#fff"/><rect x="3.6" y="3.10" width="8.4" height="1.85" fill="#fff"/><rect x="0" y="5.85" width="2.4" height="1.85" fill="#fff"/><rect x="3.6" y="5.85" width="8.4" height="1.85" fill="#fff"/><rect x="0" y="8.60" width="2.4" height="1.85" fill="#fff"/><rect x="3.6" y="8.60" width="8.4" height="1.85" fill="#fff"/></svg>
<div class="t" style="left:1645px;top:372.2px;font-size:13px;line-height:16px;color:#fff;font-weight:normal;letter-spacing:-0.2px">旅游日期</div>
<div class="a" style="left:1705px;top:368.6px;width:23.00px;height:22.00px;background:#18bc9c;border-radius:3px"></div>
<svg style="left:1711px;top:374.1px" width="11" height="11" viewBox="0 0 11 11"><path d="M8.5 0.8 L11.2 3.5 L4 10.7 L1.3 8 Z" fill="#fff"/><path d="M1 8.6 L3.4 11 L0 12 Z" fill="#fff"/></svg>
<div class="a" style="left:1732.5px;top:368.6px;width:22.50px;height:22.00px;background:#f75444;border-radius:3px"></div>
<svg style="left:1739px;top:374.1px" width="9" height="11" viewBox="0 0 9 11"><path d="M2.70 2 L3.24 0.3 L5.76 0.3 L6.30 2" fill="none" stroke="#fff" stroke-width="1.1"/><rect x="0" y="1.9" width="9" height="1.6" fill="#fff"/><path d="M1 3.5 L8 3.5 L8 10 Q8 11 7 11 L2 11 Q1 11 1 10 Z" fill="#fff"/><rect x="2.54" y="5" width="0.9" height="4.50" fill="#f75444"/><rect x="4.05" y="5" width="0.9" height="4.50" fill="#f75444"/><rect x="5.56" y="5" width="0.9" height="4.50" fill="#f75444"/></svg>
<div class="a" style="left:288.5px;top:425.04999999999995px;width:14.00px;height:14.00px;border:1.8px solid #8c8c8c;border-radius:2.5px;background:#fff"></div>
<div class="t" style="left:303.2px;width:80px;text-align:center;top:424.1px;font-size:14px;line-height:17px;color:#333;font-weight:normal">12</div>
<div class="t" style="left:367.0px;width:240px;text-align:center;top:424.1px;font-size:14px;line-height:17px;color:#333;font-weight:normal">哈尔滨</div>
<div class="t" style="left:605.0px;width:80px;text-align:center;top:424.1px;font-size:14px;line-height:17px;color:#333;font-weight:normal">国内游</div>
<div class="t" style="left:1529.2px;width:80px;text-align:center;top:424.1px;font-size:14px;line-height:17px;color:#333;font-weight:normal">3</div>
<div class="a" style="left:1622.5px;top:421.9px;width:78.50px;height:22.00px;background:#444c69;border-radius:3px"></div>
<svg style="left:1629px;top:427.4px" width="12" height="11" viewBox="0 0 12 11"><rect x="0" y="0.35" width="2.4" height="1.85" fill="#fff"/><rect x="3.6" y="0.35" width="8.4" height="1.85" fill="#fff"/><rect x="0" y="3.10" width="2.4" height="1.85" fill="#fff"/><rect x="3.6" y="3.10" width="8.4" height="1.85" fill="#fff"/><rect x="0" y="5.85" width="2.4" height="1.85" fill="#fff"/><rect x="3.6" y="5.85" width="8.4" height="1.85" fill="#fff"/><rect x="0" y="8.60" width="2.4" height="1.85" fill="#fff"/><rect x="3.6" y="8.60" width="8.4" height="1.85" fill="#fff"/></svg>
<div class="t" style="left:1645px;top:425.5px;font-size:13px;line-height:16px;color:#fff;font-weight:normal;letter-spacing:-0.2px">旅游日期</div>
<div class="a" style="left:1705px;top:421.9px;width:23.00px;height:22.00px;background:#18bc9c;border-radius:3px"></div>
<svg style="left:1711px;top:427.4px" width="11" height="11" viewBox="0 0 11 11"><path d="M8.5 0.8 L11.2 3.5 L4 10.7 L1.3 8 Z" fill="#fff"/><path d="M1 8.6 L3.4 11 L0 12 Z" fill="#fff"/></svg>
<div class="a" style="left:1732.5px;top:421.9px;width:22.50px;height:22.00px;background:#f75444;border-radius:3px"></div>
<svg style="left:1739px;top:427.4px" width="9" height="11" viewBox="0 0 9 11"><path d="M2.70 2 L3.24 0.3 L5.76 0.3 L6.30 2" fill="none" stroke="#fff" stroke-width="1.1"/><rect x="0" y="1.9" width="9" height="1.6" fill="#fff"/><path d="M1 3.5 L8 3.5 L8 10 Q8 11 7 11 L2 11 Q1 11 1 10 Z" fill="#fff"/><rect x="2.54" y="5" width="0.9" height="4.50" fill="#f75444"/><rect x="4.05" y="5" width="0.9" height="4.50" fill="#f75444"/><rect x="5.56" y="5" width="0.9" height="4.50" fill="#f75444"/></svg>
<div class="a" style="left:288.5px;top:478.34999999999997px;width:14.00px;height:14.00px;border:1.8px solid #8c8c8c;border-radius:2.5px;background:#fff"></div>
<div class="t" style="left:303.2px;width:80px;text-align:center;top:477.4px;font-size:14px;line-height:17px;color:#333;font-weight:normal">11</div>
<div class="t" style="left:367.0px;width:240px;text-align:center;top:477.4px;font-size:14px;line-height:17px;color:#333;font-weight:normal">苏州-无锡-常州三日游</div>
<div class="t" style="left:605.0px;width:80px;text-align:center;top:477.4px;font-size:14px;line-height:17px;color:#333;font-weight:normal">国内游</div>
<div class="t" style="left:1529.2px;width:80px;text-align:center;top:477.4px;font-size:14px;line-height:17px;color:#333;font-weight:normal">3</div>
<div class="a" style="left:1622.5px;top:475.2px;width:78.50px;height:22.00px;background:#444c69;border-radius:3px"></div>
<svg style="left:1629px;top:480.7px" width="12" height="11" viewBox="0 0 12 11"><rect x="0" y="0.35" width="2.4" height="1.85" fill="#fff"/><rect x="3.6" y="0.35" width="8.4" height="1.85" fill="#fff"/><rect x="0" y="3.10" width="2.4" height="1.85" fill="#fff"/><rect x="3.6" y="3.10" width="8.4" height="1.85" fill="#fff"/><rect x="0" y="5.85" width="2.4" height="1.85" fill="#fff"/><rect x="3.6" y="5.85" width="8.4" height="1.85" fill="#fff"/><rect x="0" y="8.60" width="2.4" height="1.85" fill="#fff"/><rect x="3.6" y="8.60" width="8.4" height="1.85" fill="#fff"/></svg>
<div class="t" style="left:1645px;top:478.8px;font-size:13px;line-height:16px;color:#fff;font-weight:normal;letter-spacing:-0.2px">旅游日期</div>
<div class="a" style="left:1705px;top:475.2px;width:23.00px;height:22.00px;background:#18bc9c;border-radius:3px"></div>
<svg style="left:1711px;top:480.7px" width="11" height="11" viewBox="0 0 11 11"><path d="M8.5 0.8 L11.2 3.5 L4 10.7 L1.3 8 Z" fill="#fff"/><path d="M1 8.6 L3.4 11 L0 12 Z" fill="#fff"/></svg>
<div class="a" style="left:1732.5px;top:475.2px;width:22.50px;height:22.00px;background:#f75444;border-radius:3px"></div>
<svg style="left:1739px;top:480.7px" width="9" height="11" viewBox="0 0 9 11"><path d="M2.70 2 L3.24 0.3 L5.76 0.3 L6.30 2" fill="none" stroke="#fff" stroke-width="1.1"/><rect x="0" y="1.9" width="9" height="1.6" fill="#fff"/><path d="M1 3.5 L8 3.5 L8 10 Q8 11 7 11 L2 11 Q1 11 1 10 Z" fill="#fff"/><rect x="2.54" y="5" width="0.9" height="4.50" fill="#f75444"/><rect x="4.05" y="5" width="0.9" height="4.50" fill="#f75444"/><rect x="5.56" y="5" width="0.9" height="4.50" fill="#f75444"/></svg>
<div class="a" style="left:288.5px;top:531.65px;width:14.00px;height:14.00px;border:1.8px solid #8c8c8c;border-radius:2.5px;background:#fff"></div>
<div class="t" style="left:303.2px;width:80px;text-align:center;top:530.8px;font-size:14px;line-height:17px;color:#333;font-weight:normal">4</div>
<div class="t" style="left:367.0px;width:240px;text-align:center;top:530.8px;font-size:14px;line-height:17px;color:#333;font-weight:normal">上海游</div>
<div class="t" style="left:605.0px;width:80px;text-align:center;top:530.8px;font-size:14px;line-height:17px;color:#333;font-weight:normal">国内游</div>
<div class="t" style="left:1529.2px;width:80px;text-align:center;top:530.8px;font-size:14px;line-height:17px;color:#333;font-weight:normal">3</div>
<div class="a" style="left:1622.5px;top:528.5px;width:78.50px;height:22.00px;background:#444c69;border-radius:3px"></div>
<svg style="left:1629px;top:534.0px" width="12" height="11" viewBox="0 0 12 11"><rect x="0" y="0.35" width="2.4" height="1.85" fill="#fff"/><rect x="3.6" y="0.35" width="8.4" height="1.85" fill="#fff"/><rect x="0" y="3.10" width="2.4" height="1.85" fill="#fff"/><rect x="3.6" y="3.10" width="8.4" height="1.85" fill="#fff"/><rect x="0" y="5.85" width="2.4" height="1.85" fill="#fff"/><rect x="3.6" y="5.85" width="8.4" height="1.85" fill="#fff"/><rect x="0" y="8.60" width="2.4" height="1.85" fill="#fff"/><rect x="3.6" y="8.60" width="8.4" height="1.85" fill="#fff"/></svg>
<div class="t" style="left:1645px;top:532.1px;font-size:13px;line-height:16px;color:#fff;font-weight:normal;letter-spacing:-0.2px">旅游日期</div>
<div class="a" style="left:1705px;top:528.5px;width:23.00px;height:22.00px;background:#18bc9c;border-radius:3px"></div>
<svg style="left:1711px;top:534.0px" width="11" height="11" viewBox="0 0 11 11"><path d="M8.5 0.8 L11.2 3.5 L4 10.7 L1.3 8 Z" fill="#fff"/><path d="M1 8.6 L3.4 11 L0 12 Z" fill="#fff"/></svg>
<div class="a" style="left:1732.5px;top:528.5px;width:22.50px;height:22.00px;background:#f75444;border-radius:3px"></div>
<svg style="left:1739px;top:534.0px" width="9" height="11" viewBox="0 0 9 11"><path d="M2.70 2 L3.24 0.3 L5.76 0.3 L6.30 2" fill="none" stroke="#fff" stroke-width="1.1"/><rect x="0" y="1.9" width="9" height="1.6" fill="#fff"/><path d="M1 3.5 L8 3.5 L8 10 Q8 11 7 11 L2 11 Q1 11 1 10 Z" fill="#fff"/><rect x="2.54" y="5" width="0.9" height="4.50" fill="#f75444"/><rect x="4.05" y="5" width="0.9" height="4.50" fill="#f75444"/><rect x="5.56" y="5" width="0.9" height="4.50" fill="#f75444"/></svg>
<div class="a" style="left:288.5px;top:584.9499999999999px;width:14.00px;height:14.00px;border:1.8px solid #8c8c8c;border-radius:2.5px;background:#fff"></div>
<div class="t" style="left:303.2px;width:80px;text-align:center;top:584.0px;font-size:14px;line-height:17px;color:#333;font-weight:normal">2</div>
<div class="t" style="left:367.0px;width:240px;text-align:center;top:584.0px;font-size:14px;line-height:17px;color:#333;font-weight:normal">新疆自驾游</div>
<div class="t" style="left:605.0px;width:80px;text-align:center;top:584.0px;font-size:14px;line-height:17px;color:#333;font-weight:normal">国内游</div>
<div class="t" style="left:1529.2px;width:80px;text-align:center;top:584.0px;font-size:14px;line-height:17px;color:#333;font-weight:normal">20</div>
<div class="a" style="left:1622.5px;top:581.8px;width:78.50px;height:22.00px;background:#444c69;border-radius:3px"></div>
<svg style="left:1629px;top:587.3px" width="12" height="11" viewBox="0 0 12 11"><rect x="0" y="0.35" width="2.4" height="1.85" fill="#fff"/><rect x="3.6" y="0.35" width="8.4" height="1.85" fill="#fff"/><rect x="0" y="3.10" width="2.4" height="1.85" fill="#fff"/><rect x="3.6" y="3.10" width="8.4" height="1.85" fill="#fff"/><rect x="0" y="5.85" width="2.4" height="1.85" fill="#fff"/><rect x="3.6" y="5.85" width="8.4" height="1.85" fill="#fff"/><rect x="0" y="8.60" width="2.4" height="1.85" fill="#fff"/><rect x="3.6" y="8.60" width="8.4" height="1.85" fill="#fff"/></svg>
<div class="t" style="left:1645px;top:585.4px;font-size:13px;line-height:16px;color:#fff;font-weight:normal;letter-spacing:-0.2px">旅游日期</div>
<div class="a" style="left:1705px;top:581.8px;width:23.00px;height:22.00px;background:#18bc9c;border-radius:3px"></div>
<svg style="left:1711px;top:587.3px" width="11" height="11" viewBox="0 0 11 11"><path d="M8.5 0.8 L11.2 3.5 L4 10.7 L1.3 8 Z" fill="#fff"/><path d="M1 8.6 L3.4 11 L0 12 Z" fill="#fff"/></svg>
<div class="a" style="left:1732.5px;top:581.8px;width:22.50px;height:22.00px;background:#f75444;border-radius:3px"></div>
<svg style="left:1739px;top:587.3px" width="9" height="11" viewBox="0 0 9 11"><path d="M2.70 2 L3.24 0.3 L5.76 0.3 L6.30 2" fill="none" stroke="#fff" stroke-width="1.1"/><rect x="0" y="1.9" width="9" height="1.6" fill="#fff"/><path d="M1 3.5 L8 3.5 L8 10 Q8 11 7 11 L2 11 Q1 11 1 10 Z" fill="#fff"/><rect x="2.54" y="5" width="0.9" height="4.50" fill="#f75444"/><rect x="4.05" y="5" width="0.9" height="4.50" fill="#f75444"/><rect x="5.56" y="5" width="0.9" height="4.50" fill="#f75444"/></svg>
<div class="t" style="left:684.8px;width:290px;text-align:center;top:264.2px;font-size:14px;line-height:17px;color:#333;font-weight:normal">海南三亚旅居游</div>
<svg style="left:992.5px;top:265.65px" width="13" height="13" viewBox="0 0 13 13"><circle cx="6.5" cy="6.5" r="6.2" fill="#e74c3c"/></svg>
<div class="t" style="left:1010px;top:264.2px;font-size:14px;line-height:17px;color:#e74c3c;font-weight:normal;">已通过</div>
<div class="t" style="left:1338.2px;width:80px;text-align:center;top:264.2px;font-size:14px;line-height:17px;color:#333;font-weight:normal">1</div>
<div class="t" style="left:1433.2px;width:80px;text-align:center;top:264.2px;font-size:14px;line-height:17px;color:#333;font-weight:normal">3</div>
<svg style="left:1085.5px;top:256px;filter:blur(0.3px)" width="32.00" height="32.00" shape-rendering="crispEdges"><rect x="0.00" y="0.00" width="5.63" height="5.63" fill="#2f63d2"/><rect x="5.33" y="0.00" width="5.63" height="5.63" fill="#2f63d2"/><rect x="10.67" y="0.00" width="5.63" height="5.63" fill="#2f63d2"/><rect x="16.00" y="0.00" width="5.63" height="5.63" fill="#2f63d2"/><rect x="21.33" y="0.00" width="5.63" height="5.63" fill="#2f63d2"/><rect x="26.67" y="0.00" width="5.63" height="5.63" fill="#2f63d2"/><rect x="0.00" y="5.33" width="5.63" height="5.63" fill="#3a78df"/><rect x="5.33" y="5.33" width="5.63" height="5.63" fill="#3a78df"/><rect x="10.67" y="5.33" width="5.63" height="5.63" fill="#3a78df"/><rect x="16.00" y="5.33" width="5.63" height="5.63" fill="#3a78df"/><rect x="21.33" y="5.33" width="5.63" height="5.63" fill="#3a78df"/><rect x="26.67" y="5.33" width="5.63" height="5.63" fill="#3a78df"/><rect x="0.00" y="10.67" width="5.63" height="5.63" fill="#5b8fe0"/><rect x="5.33" y="10.67" width="5.63" height="5.63" fill="#5b8fe0"/><rect x="10.67" y="10.67" width="5.63" height="5.63" fill="#5b8fe0"/><rect x="16.00" y="10.67" width="5.63" height="5.63" fill="#5b8fe0"/><rect x="21.33" y="10.67" width="5.63" height="5.63" fill="#5b8fe0"/><rect x="26.67" y="10.67" width="5.63" height="5.63" fill="#3a78df"/><rect x="0.00" y="16.00" width="5.63" height="5.63" fill="#8db2e6"/><rect x="5.33" y="16.00" width="5.63" height="5.63" fill="#8db2e6"/><rect x="10.67" y="16.00" width="5.63" height="5.63" fill="#8db2e6"/><rect x="16.00" y="16.00" width="5.63" height="5.63" fill="#8db2e6"/><rect x="21.33" y="16.00" width="5.63" height="5.63" fill="#8db2e6"/><rect x="26.67" y="16.00" width="5.63" height="5.63" fill="#8db2e6"/><rect x="0.00" y="21.33" width="5.63" height="5.63" fill="#a9c2de"/><rect x="5.33" y="21.33" width="5.63" height="5.63" fill="#a9c2de"/><rect x="10.67" y="21.33" width="5.63" height="5.63" fill="#a9c2de"/><rect x="16.00" y="21.33" width="5.63" height="5.63" fill="#a9c2de"/><rect x="21.33" y="21.33" width="5.63" height="5.63" fill="#a9c2de"/><rect x="26.67" y="21.33" width="5.63" height="5.63" fill="#a9c2de"/><rect x="0.00" y="26.67" width="5.63" height="5.63" fill="#6d8b92"/><rect x="5.33" y="26.67" width="5.63" height="5.63" fill="#6d8b92"/><rect x="10.67" y="26.67" width="5.63" height="5.63" fill="#6d8b92"/><rect x="16.00" y="26.67" width="5.63" height="5.63" fill="#6d8b92"/><rect x="21.33" y="26.67" width="5.63" height="5.63" fill="#4f6a48"/><rect x="26.67" y="26.67" width="5.63" height="5.63" fill="#4f6a48"/></svg>
<svg style="left:1185px;top:256px;filter:blur(0.3px)" width="32.00" height="32.00" shape-rendering="crispEdges"><rect x="0.00" y="0.00" width="5.63" height="5.63" fill="#5b8fe0"/><rect x="5.33" y="0.00" width="5.63" height="5.63" fill="#2f63d2"/><rect x="10.67" y="0.00" width="5.63" height="5.63" fill="#2f63d2"/><rect x="16.00" y="0.00" width="5.63" height="5.63" fill="#3a78df"/><rect x="21.33" y="0.00" width="5.63" height="5.63" fill="#8db2e6"/><rect x="26.67" y="0.00" width="5.63" height="5.63" fill="#8db2e6"/><rect x="0.00" y="5.33" width="5.63" height="5.63" fill="#3a78df"/><rect x="5.33" y="5.33" width="5.63" height="5.63" fill="#3a78df"/><rect x="10.67" y="5.33" width="5.63" height="5.63" fill="#8db2e6"/><rect x="16.00" y="5.33" width="5.63" height="5.63" fill="#8db2e6"/><rect x="21.33" y="5.33" width="5.63" height="5.63" fill="#c0c8d0"/><rect x="26.67" y="5.33" width="5.63" height="5.63" fill="#c0c8d0"/><rect x="0.00" y="10.67" width="5.63" height="5.63" fill="#5b8fe0"/><rect x="5.33" y="10.67" width="5.63" height="5.63" fill="#5b8fe0"/><rect x="10.67" y="10.67" width="5.63" height="5.63" fill="#5b8fe0"/><rect x="16.00" y="10.67" width="5.63" height="5.63" fill="#8db2e6"/><rect x="21.33" y="10.67" width="5.63" height="5.63" fill="#7a9a9a"/><rect x="26.67" y="10.67" width="5.63" height="5.63" fill="#8db2e6"/><rect x="0.00" y="16.00" width="5.63" height="5.63" fill="#8db2e6"/><rect x="5.33" y="16.00" width="5.63" height="5.63" fill="#8db2e6"/><rect x="10.67" y="16.00" width="5.63" height="5.63" fill="#6d8b92"/><rect x="16.00" y="16.00" width="5.63" height="5.63" fill="#5a6a60"/><rect x="21.33" y="16.00" width="5.63" height="5.63" fill="#7a9a9a"/><rect x="26.67" y="16.00" width="5.63" height="5.63" fill="#8db2e6"/><rect x="0.00" y="21.33" width="5.63" height="5.63" fill="#a9c2de"/><rect x="5.33" y="21.33" width="5.63" height="5.63" fill="#6d8b92"/><rect x="10.67" y="21.33" width="5.63" height="5.63" fill="#5a6a60"/><rect x="16.00" y="21.33" width="5.63" height="5.63" fill="#4f6a48"/><rect x="21.33" y="21.33" width="5.63" height="5.63" fill="#7a9a9a"/><rect x="26.67" y="21.33" width="5.63" height="5.63" fill="#a9c2de"/><rect x="0.00" y="26.67" width="5.63" height="5.63" fill="#6d8b92"/><rect x="5.33" y="26.67" width="5.63" height="5.63" fill="#6d8b92"/><rect x="10.67" y="26.67" width="5.63" height="5.63" fill="#5a6a60"/><rect x="16.00" y="26.67" width="5.63" height="5.63" fill="#4f6a48"/><rect x="21.33" y="26.67" width="5.63" height="5.63" fill="#6d8b92"/><rect x="26.67" y="26.67" width="5.63" height="5.63" fill="#6d8b92"/></svg>
<svg style="left:1221px;top:256px;filter:blur(0.3px)" width="32.00" height="32.00" shape-rendering="crispEdges"><rect x="0.00" y="0.00" width="5.63" height="5.63" fill="#2f63d2"/><rect x="5.33" y="0.00" width="5.63" height="5.63" fill="#2f63d2"/><rect x="10.67" y="0.00" width="5.63" height="5.63" fill="#2f63d2"/><rect x="16.00" y="0.00" width="5.63" height="5.63" fill="#2f63d2"/><rect x="21.33" y="0.00" width="5.63" height="5.63" fill="#2f63d2"/><rect x="26.67" y="0.00" width="5.63" height="5.63" fill="#2f63d2"/><rect x="0.00" y="5.33" width="5.63" height="5.63" fill="#3a78df"/><rect x="5.33" y="5.33" width="5.63" height="5.63" fill="#3a78df"/><rect x="10.67" y="5.33" width="5.63" height="5.63" fill="#3a78df"/><rect x="16.00" y="5.33" width="5.63" height="5.63" fill="#3a78df"/><rect x="21.33" y="5.33" width="5.63" height="5.63" fill="#3a78df"/><rect x="26.67" y="5.33" width="5.63" height="5.63" fill="#3a78df"/><rect x="0.00" y="10.67" width="5.63" height="5.63" fill="#5b8fe0"/><rect x="5.33" y="10.67" width="5.63" height="5.63" fill="#5b8fe0"/><rect x="10.67" y="10.67" width="5.63" height="5.63" fill="#5b8fe0"/><rect x="16.00" y="10.67" width="5.63" height="5.63" fill="#5b8fe0"/><rect x="21.33" y="10.67" width="5.63" height="5.63" fill="#5b8fe0"/><rect x="26.67" y="10.67" width="5.63" height="5.63" fill="#3a78df"/><rect x="0.00" y="16.00" width="5.63" height="5.63" fill="#8db2e6"/><rect x="5.33" y="16.00" width="5.63" height="5.63" fill="#8db2e6"/><rect x="10.67" y="16.00" width="5.63" height="5.63" fill="#8db2e6"/><rect x="16.00" y="16.00" width="5.63" height="5.63" fill="#8db2e6"/><rect x="21.33" y="16.00" width="5.63" height="5.63" fill="#8db2e6"/><rect x="26.67" y="16.00" width="5.63" height="5.63" fill="#8db2e6"/><rect x="0.00" y="21.33" width="5.63" height="5.63" fill="#a9c2de"/><rect x="5.33" y="21.33" width="5.63" height="5.63" fill="#a9c2de"/><rect x="10.67" y="21.33" width="5.63" height="5.63" fill="#a9c2de"/><rect x="16.00" y="21.33" width="5.63" height="5.63" fill="#a9c2de"/><rect x="21.33" y="21.33" width="5.63" height="5.63" fill="#a9c2de"/><rect x="26.67" y="21.33" width="5.63" height="5.63" fill="#a9c2de"/><rect x="0.00" y="26.67" width="5.63" height="5.63" fill="#6d8b92"/><rect x="5.33" y="26.67" width="5.63" height="5.63" fill="#6d8b92"/><rect x="10.67" y="26.67" width="5.63" height="5.63" fill="#6d8b92"/><rect x="16.00" y="26.67" width="5.63" height="5.63" fill="#6d8b92"/><rect x="21.33" y="26.67" width="5.63" height="5.63" fill="#4f6a48"/><rect x="26.67" y="26.67" width="5.63" height="5.63" fill="#4f6a48"/></svg>
<svg style="left:1257px;top:256px;filter:blur(0.3px)" width="32.00" height="32.00" shape-rendering="crispEdges"><rect x="0.00" y="0.00" width="5.63" height="5.63" fill="#8aa0b8"/><rect x="5.33" y="0.00" width="5.63" height="5.63" fill="#8aa0b8"/><rect x="10.67" y="0.00" width="5.63" height="5.63" fill="#5b8fe0"/><rect x="16.00" y="0.00" width="5.63" height="5.63" fill="#8db2e6"/><rect x="21.33" y="0.00" width="5.63" height="5.63" fill="#8db2e6"/><rect x="26.67" y="0.00" width="5.63" height="5.63" fill="#8aa0b8"/><rect x="0.00" y="5.33" width="5.63" height="5.63" fill="#5b8fe0"/><rect x="5.33" y="5.33" width="5.63" height="5.63" fill="#8aa0b8"/><rect x="10.67" y="5.33" width="5.63" height="5.63" fill="#8db2e6"/><rect x="16.00" y="5.33" width="5.63" height="5.63" fill="#8db2e6"/><rect x="21.33" y="5.33" width="5.63" height="5.63" fill="#8aa0b8"/><rect x="26.67" y="5.33" width="5.63" height="5.63" fill="#8db2e6"/><rect x="0.00" y="10.67" width="5.63" height="5.63" fill="#8db2e6"/><rect x="5.33" y="10.67" width="5.63" height="5.63" fill="#8aa0b8"/><rect x="10.67" y="10.67" width="5.63" height="5.63" fill="#c0c8d0"/><rect x="16.00" y="10.67" width="5.63" height="5.63" fill="#8db2e6"/><rect x="21.33" y="10.67" width="5.63" height="5.63" fill="#8db2e6"/><rect x="26.67" y="10.67" width="5.63" height="5.63" fill="#8db2e6"/><rect x="0.00" y="16.00" width="5.63" height="5.63" fill="#7a9a9a"/><rect x="5.33" y="16.00" width="5.63" height="5.63" fill="#5a6a60"/><rect x="10.67" y="16.00" width="5.63" height="5.63" fill="#5a6a60"/><rect x="16.00" y="16.00" width="5.63" height="5.63" fill="#6d8b92"/><rect x="21.33" y="16.00" width="5.63" height="5.63" fill="#8aa0b8"/><rect x="26.67" y="16.00" width="5.63" height="5.63" fill="#8aa0b8"/><rect x="0.00" y="21.33" width="5.63" height="5.63" fill="#5a6a60"/><rect x="5.33" y="21.33" width="5.63" height="5.63" fill="#5a6a60"/><rect x="10.67" y="21.33" width="5.63" height="5.63" fill="#6d8b92"/><rect x="16.00" y="21.33" width="5.63" height="5.63" fill="#6d8b92"/><rect x="21.33" y="21.33" width="5.63" height="5.63" fill="#6d8b92"/><rect x="26.67" y="21.33" width="5.63" height="5.63" fill="#5a6a60"/><rect x="0.00" y="26.67" width="5.63" height="5.63" fill="#5a6a60"/><rect x="5.33" y="26.67" width="5.63" height="5.63" fill="#4f6a48"/><rect x="10.67" y="26.67" width="5.63" height="5.63" fill="#4f6a48"/><rect x="16.00" y="26.67" width="5.63" height="5.63" fill="#6d8b92"/><rect x="21.33" y="26.67" width="5.63" height="5.63" fill="#5a6a60"/><rect x="26.67" y="26.67" width="5.63" height="5.63" fill="#5a6a60"/></svg>
<div class="t" style="left:271.5px;top:639.6px;font-size:14px;line-height:17px;color:#333;font-weight:normal;">显示第 1 到第 7 条记录，总共 7 条记录</div>
<div class="t" style="left:1549px;top:817.1px;font-size:32px;line-height:38px;color:rgba(255,255,255,.38);font-weight:normal;letter-spacing:0.9px">FASTADMIN</div>
<div class="a" style="left:701px;top:283px;width:835.00px;height:697.00px;background:#fff;box-shadow:1px 1px 50px rgba(0,0,0,.3);border-radius:2px 2px 0 0"></div>
<div class="a" style="left:701px;top:283px;width:835.00px;height:47.00px;background:#2c3e50;border-radius:2px 2px 0 0"></div>
<div class="t" style="left:722.5px;top:299.1px;font-size:14.5px;line-height:17px;color:#fff;font-weight:normal;">编辑</div>
<div class="a" style="left:1453px;top:308.5px;width:12.00px;height:1.50px;background:#fff"></div>
<svg style="left:1480px;top:301.5px" width="14" height="11" viewBox="0 0 14 11"><rect x="0.6" y="3.6" width="10" height="6.8" fill="none" stroke="#e6e9ec" stroke-width="1.1"/><path d="M3 3.6 L3 0.6 L13.4 0.6 L13.4 7.6 L10.6 7.6" fill="none" stroke="#e6e9ec" stroke-width="1.1"/></svg>
<svg style="left:1509px;top:303px" width="9" height="8.5" viewBox="0 0 9 8.5"><path d="M0.5 0.5 L8.5 8 M8.5 0.5 L0.5 8" stroke="#e6e9ec" stroke-width="1.1"/></svg>
<div class="a" style="left:856.4px;top:320px;width:123.00px;height:55.50px;background:#fff;border:1px solid #e6e6e6;border-radius:3px;box-shadow:0 1px 2px rgba(0,0,0,.06)"></div>
<svg style="left:860.4px;top:330.5px;filter:blur(0.4px)" width="114.50" height="40.00" shape-rendering="crispEdges"><rect x="0.00" y="0.00" width="5.28" height="5.30" fill="#a3c5ef"/><rect x="4.98" y="0.00" width="5.28" height="5.30" fill="#a3c5ef"/><rect x="9.96" y="0.00" width="5.28" height="5.30" fill="#a3c5ef"/><rect x="14.93" y="0.00" width="5.28" height="5.30" fill="#a3c5ef"/><rect x="19.91" y="0.00" width="5.28" height="5.30" fill="#a3c5ef"/><rect x="24.89" y="0.00" width="5.28" height="5.30" fill="#a3c5ef"/><rect x="29.87" y="0.00" width="5.28" height="5.30" fill="#a3c5ef"/><rect x="34.85" y="0.00" width="5.28" height="5.30" fill="#a3c5ef"/><rect x="39.83" y="0.00" width="5.28" height="5.30" fill="#a3c5ef"/><rect x="44.80" y="0.00" width="5.28" height="5.30" fill="#a3c5ef"/><rect x="49.78" y="0.00" width="5.28" height="5.30" fill="#a59a95"/><rect x="54.76" y="0.00" width="5.28" height="5.30" fill="#a59a95"/><rect x="59.74" y="0.00" width="5.28" height="5.30" fill="#c8b6ad"/><rect x="64.72" y="0.00" width="5.28" height="5.30" fill="#a3c5ef"/><rect x="69.70" y="0.00" width="5.28" height="5.30" fill="#a3c5ef"/><rect x="74.67" y="0.00" width="5.28" height="5.30" fill="#a3c5ef"/><rect x="79.65" y="0.00" width="5.28" height="5.30" fill="#a3c5ef"/><rect x="84.63" y="0.00" width="5.28" height="5.30" fill="#a3c5ef"/><rect x="89.61" y="0.00" width="5.28" height="5.30" fill="#a3c5ef"/><rect x="94.59" y="0.00" width="5.28" height="5.30" fill="#a3c5ef"/><rect x="99.57" y="0.00" width="5.28" height="5.30" fill="#a3c5ef"/><rect x="104.54" y="0.00" width="5.28" height="5.30" fill="#a3c5ef"/><rect x="109.52" y="0.00" width="5.28" height="5.30" fill="#a3c5ef"/><rect x="0.00" y="5.00" width="5.28" height="5.30" fill="#7ba8dc"/><rect x="4.98" y="5.00" width="5.28" height="5.30" fill="#7ba8dc"/><rect x="9.96" y="5.00" width="5.28" height="5.30" fill="#7ba8dc"/><rect x="14.93" y="5.00" width="5.28" height="5.30" fill="#7ba8dc"/><rect x="19.91" y="5.00" width="5.28" height="5.30" fill="#9ab0c8"/><rect x="24.89" y="5.00" width="5.28" height="5.30" fill="#9ab0c8"/><rect x="29.87" y="5.00" width="5.28" height="5.30" fill="#9ab0c8"/><rect x="34.85" y="5.00" width="5.28" height="5.30" fill="#9ab0c8"/><rect x="39.83" y="5.00" width="5.28" height="5.30" fill="#9ab0c8"/><rect x="44.80" y="5.00" width="5.28" height="5.30" fill="#a59a95"/><rect x="49.78" y="5.00" width="5.28" height="5.30" fill="#8d8a8c"/><rect x="54.76" y="5.00" width="5.28" height="5.30" fill="#c8b6ad"/><rect x="59.74" y="5.00" width="5.28" height="5.30" fill="#9ab0c8"/><rect x="64.72" y="5.00" width="5.28" height="5.30" fill="#7ba8dc"/><rect x="69.70" y="5.00" width="5.28" height="5.30" fill="#7ba8dc"/><rect x="74.67" y="5.00" width="5.28" height="5.30" fill="#7ba8dc"/><rect x="79.65" y="5.00" width="5.28" height="5.30" fill="#7ba8dc"/><rect x="84.63" y="5.00" width="5.28" height="5.30" fill="#7ba8dc"/><rect x="89.61" y="5.00" width="5.28" height="5.30" fill="#7ba8dc"/><rect x="94.59" y="5.00" width="5.28" height="5.30" fill="#7ba8dc"/><rect x="99.57" y="5.00" width="5.28" height="5.30" fill="#7ba8dc"/><rect x="104.54" y="5.00" width="5.28" height="5.30" fill="#7ba8dc"/><rect x="109.52" y="5.00" width="5.28" height="5.30" fill="#7ba8dc"/><rect x="0.00" y="10.00" width="5.28" height="5.30" fill="#4b8cbd"/><rect x="4.98" y="10.00" width="5.28" height="5.30" fill="#4b8cbd"/><rect x="9.96" y="10.00" width="5.28" height="5.30" fill="#4b8cbd"/><rect x="14.93" y="10.00" width="5.28" height="5.30" fill="#4b8cbd"/><rect x="19.91" y="10.00" width="5.28" height="5.30" fill="#9ab0c8"/><rect x="24.89" y="10.00" width="5.28" height="5.30" fill="#9ab0c8"/><rect x="29.87" y="10.00" width="5.28" height="5.30" fill="#9ab0c8"/><rect x="34.85" y="10.00" width="5.28" height="5.30" fill="#9ab0c8"/><rect x="39.83" y="10.00" width="5.28" height="5.30" fill="#9ab0c8"/><rect x="44.80" y="10.00" width="5.28" height="5.30" fill="#a59a95"/><rect x="49.78" y="10.00" width="5.28" height="5.30" fill="#55565c"/><rect x="54.76" y="10.00" width="5.28" height="5.30" fill="#8d8a8c"/><rect x="59.74" y="10.00" width="5.28" height="5.30" fill="#c8b6ad"/><rect x="64.72" y="10.00" width="5.28" height="5.30" fill="#9ab0c8"/><rect x="69.70" y="10.00" width="5.28" height="5.30" fill="#9ab0c8"/><rect x="74.67" y="10.00" width="5.28" height="5.30" fill="#4b8cbd"/><rect x="79.65" y="10.00" width="5.28" height="5.30" fill="#4b8cbd"/><rect x="84.63" y="10.00" width="5.28" height="5.30" fill="#4b8cbd"/><rect x="89.61" y="10.00" width="5.28" height="5.30" fill="#4b8cbd"/><rect x="94.59" y="10.00" width="5.28" height="5.30" fill="#4b8cbd"/><rect x="99.57" y="10.00" width="5.28" height="5.30" fill="#4b8cbd"/><rect x="104.54" y="10.00" width="5.28" height="5.30" fill="#4b8cbd"/><rect x="109.52" y="10.00" width="5.28" height="5.30" fill="#4b8cbd"/><rect x="0.00" y="15.00" width="5.28" height="5.30" fill="#4b8cbd"/><rect x="4.98" y="15.00" width="5.28" height="5.30" fill="#4b8cbd"/><rect x="9.96" y="15.00" width="5.28" height="5.30" fill="#4b8cbd"/><rect x="14.93" y="15.00" width="5.28" height="5.30" fill="#4b8cbd"/><rect x="19.91" y="15.00" width="5.28" height="5.30" fill="#4b8cbd"/><rect x="24.89" y="15.00" width="5.28" height="5.30" fill="#4b8cbd"/><rect x="29.87" y="15.00" width="5.28" height="5.30" fill="#4b8cbd"/><rect x="34.85" y="15.00" width="5.28" height="5.30" fill="#4b8cbd"/><rect x="39.83" y="15.00" width="5.28" height="5.30" fill="#4b8cbd"/><rect x="44.80" y="15.00" width="5.28" height="5.30" fill="#4b8cbd"/><rect x="49.78" y="15.00" width="5.28" height="5.30" fill="#222a33"/><rect x="54.76" y="15.00" width="5.28" height="5.30" fill="#8d8a8c"/><rect x="59.74" y="15.00" width="5.28" height="5.30" fill="#c8b6ad"/><rect x="64.72" y="15.00" width="5.28" height="5.30" fill="#c8b6ad"/><rect x="69.70" y="15.00" width="5.28" height="5.30" fill="#c8b6ad"/><rect x="74.67" y="15.00" width="5.28" height="5.30" fill="#c8b6ad"/><rect x="79.65" y="15.00" width="5.28" height="5.30" fill="#9ab0c8"/><rect x="84.63" y="15.00" width="5.28" height="5.30" fill="#4b8cbd"/><rect x="89.61" y="15.00" width="5.28" height="5.30" fill="#4b8cbd"/><rect x="94.59" y="15.00" width="5.28" height="5.30" fill="#4b8cbd"/><rect x="99.57" y="15.00" width="5.28" height="5.30" fill="#4b8cbd"/><rect x="104.54" y="15.00" width="5.28" height="5.30" fill="#4b8cbd"/><rect x="109.52" y="15.00" width="5.28" height="5.30" fill="#4b8cbd"/><rect x="0.00" y="20.00" width="5.28" height="5.30" fill="#4b8cbd"/><rect x="4.98" y="20.00" width="5.28" height="5.30" fill="#4b8cbd"/><rect x="9.96" y="20.00" width="5.28" height="5.30" fill="#4b8cbd"/><rect x="14.93" y="20.00" width="5.28" height="5.30" fill="#4b8cbd"/><rect x="19.91" y="20.00" width="5.28" height="5.30" fill="#4b8cbd"/><rect x="24.89" y="20.00" width="5.28" height="5.30" fill="#4b8cbd"/><rect x="29.87" y="20.00" width="5.28" height="5.30" fill="#4b8cbd"/><rect x="34.85" y="20.00" width="5.28" height="5.30" fill="#dcd1a8"/><rect x="39.83" y="20.00" width="5.28" height="5.30" fill="#dcd1a8"/><rect x="44.80" y="20.00" width="5.28" height="5.30" fill="#dcd1a8"/><rect x="49.78" y="20.00" width="5.28" height="5.30" fill="#222a33"/><rect x="54.76" y="20.00" width="5.28" height="5.30" fill="#222a33"/><rect x="59.74" y="20.00" width="5.28" height="5.30" fill="#8d8a8c"/><rect x="64.72" y="20.00" width="5.28" height="5.30" fill="#c8b6ad"/><rect x="69.70" y="20.00" width="5.28" height="5.30" fill="#c8b6ad"/><rect x="74.67" y="20.00" width="5.28" height="5.30" fill="#c8b6ad"/><rect x="79.65" y="20.00" width="5.28" height="5.30" fill="#c8b6ad"/><rect x="84.63" y="20.00" width="5.28" height="5.30" fill="#c8b6ad"/><rect x="89.61" y="20.00" width="5.28" height="5.30" fill="#c8b6ad"/><rect x="94.59" y="20.00" width="5.28" height="5.30" fill="#9ab0c8"/><rect x="99.57" y="20.00" width="5.28" height="5.30" fill="#4b8cbd"/><rect x="104.54" y="20.00" width="5.28" height="5.30" fill="#4b8cbd"/><rect x="109.52" y="20.00" width="5.28" height="5.30" fill="#4b8cbd"/><rect x="0.00" y="25.00" width="5.28" height="5.30" fill="#d2c68a"/><rect x="4.98" y="25.00" width="5.28" height="5.30" fill="#d2c68a"/><rect x="9.96" y="25.00" width="5.28" height="5.30" fill="#d2c68a"/><rect x="14.93" y="25.00" width="5.28" height="5.30" fill="#d2c68a"/><rect x="19.91" y="25.00" width="5.28" height="5.30" fill="#d2c68a"/><rect x="24.89" y="25.00" width="5.28" height="5.30" fill="#d2c68a"/><rect x="29.87" y="25.00" width="5.28" height="5.30" fill="#dcd1a8"/><rect x="34.85" y="25.00" width="5.28" height="5.30" fill="#dcd1a8"/><rect x="39.83" y="25.00" width="5.28" height="5.30" fill="#dcd1a8"/><rect x="44.80" y="25.00" width="5.28" height="5.30" fill="#d2c68a"/><rect x="49.78" y="25.00" width="5.28" height="5.30" fill="#a29d5c"/><rect x="54.76" y="25.00" width="5.28" height="5.30" fill="#222a33"/><rect x="59.74" y="25.00" width="5.28" height="5.30" fill="#222a33"/><rect x="64.72" y="25.00" width="5.28" height="5.30" fill="#55565c"/><rect x="69.70" y="25.00" width="5.28" height="5.30" fill="#8d8a8c"/><rect x="74.67" y="25.00" width="5.28" height="5.30" fill="#c8b6ad"/><rect x="79.65" y="25.00" width="5.28" height="5.30" fill="#c8b6ad"/><rect x="84.63" y="25.00" width="5.28" height="5.30" fill="#c8b6ad"/><rect x="89.61" y="25.00" width="5.28" height="5.30" fill="#c8b6ad"/><rect x="94.59" y="25.00" width="5.28" height="5.30" fill="#c8b6ad"/><rect x="99.57" y="25.00" width="5.28" height="5.30" fill="#c8b6ad"/><rect x="104.54" y="25.00" width="5.28" height="5.30" fill="#c8b6ad"/><rect x="109.52" y="25.00" width="5.28" height="5.30" fill="#c8b6ad"/><rect x="0.00" y="30.00" width="5.28" height="5.30" fill="#a29d5c"/><rect x="4.98" y="30.00" width="5.28" height="5.30" fill="#a29d5c"/><rect x="9.96" y="30.00" width="5.28" height="5.30" fill="#6f8a3a"/><rect x="14.93" y="30.00" width="5.28" height="5.30" fill="#6f8a3a"/><rect x="19.91" y="30.00" width="5.28" height="5.30" fill="#6f8a3a"/><rect x="24.89" y="30.00" width="5.28" height="5.30" fill="#6f8a3a"/><rect x="29.87" y="30.00" width="5.28" height="5.30" fill="#6f8a3a"/><rect x="34.85" y="30.00" width="5.28" height="5.30" fill="#6f8a3a"/><rect x="39.83" y="30.00" width="5.28" height="5.30" fill="#6f8a3a"/><rect x="44.80" y="30.00" width="5.28" height="5.30" fill="#6f8a3a"/><rect x="49.78" y="30.00" width="5.28" height="5.30" fill="#6f8a3a"/><rect x="54.76" y="30.00" width="5.28" height="5.30" fill="#6f8a3a"/><rect x="59.74" y="30.00" width="5.28" height="5.30" fill="#6f8a3a"/><rect x="64.72" y="30.00" width="5.28" height="5.30" fill="#222a33"/><rect x="69.70" y="30.00" width="5.28" height="5.30" fill="#222a33"/><rect x="74.67" y="30.00" width="5.28" height="5.30" fill="#55565c"/><rect x="79.65" y="30.00" width="5.28" height="5.30" fill="#8d8a8c"/><rect x="84.63" y="30.00" width="5.28" height="5.30" fill="#c8b6ad"/><rect x="89.61" y="30.00" width="5.28" height="5.30" fill="#c8b6ad"/><rect x="94.59" y="30.00" width="5.28" height="5.30" fill="#c8b6ad"/><rect x="99.57" y="30.00" width="5.28" height="5.30" fill="#8d8a8c"/><rect x="104.54" y="30.00" width="5.28" height="5.30" fill="#c8b6ad"/><rect x="109.52" y="30.00" width="5.28" height="5.30" fill="#c8b6ad"/><rect x="0.00" y="35.00" width="5.28" height="5.30" fill="#4f6b2b"/><rect x="4.98" y="35.00" width="5.28" height="5.30" fill="#4f6b2b"/><rect x="9.96" y="35.00" width="5.28" height="5.30" fill="#4f6b2b"/><rect x="14.93" y="35.00" width="5.28" height="5.30" fill="#4f6b2b"/><rect x="19.91" y="35.00" width="5.28" height="5.30" fill="#4f6b2b"/><rect x="24.89" y="35.00" width="5.28" height="5.30" fill="#4f6b2b"/><rect x="29.87" y="35.00" width="5.28" height="5.30" fill="#4f6b2b"/><rect x="34.85" y="35.00" width="5.28" height="5.30" fill="#4f6b2b"/><rect x="39.83" y="35.00" width="5.28" height="5.30" fill="#4f6b2b"/><rect x="44.80" y="35.00" width="5.28" height="5.30" fill="#4f6b2b"/><rect x="49.78" y="35.00" width="5.28" height="5.30" fill="#4f6b2b"/><rect x="54.76" y="35.00" width="5.28" height="5.30" fill="#4f6b2b"/><rect x="59.74" y="35.00" width="5.28" height="5.30" fill="#4f6b2b"/><rect x="64.72" y="35.00" width="5.28" height="5.30" fill="#6f8a3a"/><rect x="69.70" y="35.00" width="5.28" height="5.30" fill="#222a33"/><rect x="74.67" y="35.00" width="5.28" height="5.30" fill="#222a33"/><rect x="79.65" y="35.00" width="5.28" height="5.30" fill="#222a33"/><rect x="84.63" y="35.00" width="5.28" height="5.30" fill="#55565c"/><rect x="89.61" y="35.00" width="5.28" height="5.30" fill="#8d8a8c"/><rect x="94.59" y="35.00" width="5.28" height="5.30" fill="#c8b6ad"/><rect x="99.57" y="35.00" width="5.28" height="5.30" fill="#8d8a8c"/><rect x="104.54" y="35.00" width="5.28" height="5.30" fill="#c8b6ad"/><rect x="109.52" y="35.00" width="5.28" height="5.30" fill="#c8b6ad"/></svg>
<div class="a" style="left:856.4px;top:386.5px;width:123.00px;height:22.30px;background:#f75444;border-radius:3px"></div>
<svg style="left:913.4px;top:392px" width="8.5" height="10.5" viewBox="0 0 8.5 10.5"><path d="M2.55 2 L3.06 0.3 L5.44 0.3 L5.95 2" fill="none" stroke="#fff" stroke-width="1.1"/><rect x="0" y="1.9" width="8.5" height="1.6" fill="#fff"/><path d="M1 3.5 L7.5 3.5 L7.5 9.5 Q7.5 10.5 6.5 10.5 L2 10.5 Q1 10.5 1 9.5 Z" fill="#fff"/><rect x="2.43" y="5" width="0.9" height="4.00" fill="#f75444"/><rect x="3.80" y="5" width="0.9" height="4.00" fill="#f75444"/><rect x="5.17" y="5" width="0.9" height="4.00" fill="#f75444"/></svg>
<div class="a" style="left:990.2px;top:320px;width:123.00px;height:55.50px;background:#fff;border:1px solid #e6e6e6;border-radius:3px;box-shadow:0 1px 2px rgba(0,0,0,.06)"></div>
<svg style="left:994.2px;top:330.5px;filter:blur(0.4px)" width="114.50" height="40.00" shape-rendering="crispEdges"><rect x="0.00" y="0.00" width="5.28" height="5.30" fill="#b0cbec"/><rect x="4.98" y="0.00" width="5.28" height="5.30" fill="#b0cbec"/><rect x="9.96" y="0.00" width="5.28" height="5.30" fill="#b0cbec"/><rect x="14.93" y="0.00" width="5.28" height="5.30" fill="#b0cbec"/><rect x="19.91" y="0.00" width="5.28" height="5.30" fill="#b0cbec"/><rect x="24.89" y="0.00" width="5.28" height="5.30" fill="#b0cbec"/><rect x="29.87" y="0.00" width="5.28" height="5.30" fill="#b0cbec"/><rect x="34.85" y="0.00" width="5.28" height="5.30" fill="#b0cbec"/><rect x="39.83" y="0.00" width="5.28" height="5.30" fill="#b0cbec"/><rect x="44.80" y="0.00" width="5.28" height="5.30" fill="#b0cbec"/><rect x="49.78" y="0.00" width="5.28" height="5.30" fill="#b0cbec"/><rect x="54.76" y="0.00" width="5.28" height="5.30" fill="#b0cbec"/><rect x="59.74" y="0.00" width="5.28" height="5.30" fill="#b0cbec"/><rect x="64.72" y="0.00" width="5.28" height="5.30" fill="#b0cbec"/><rect x="69.70" y="0.00" width="5.28" height="5.30" fill="#b0cbec"/><rect x="74.67" y="0.00" width="5.28" height="5.30" fill="#b0cbec"/><rect x="79.65" y="0.00" width="5.28" height="5.30" fill="#b0cbec"/><rect x="84.63" y="0.00" width="5.28" height="5.30" fill="#b0cbec"/><rect x="89.61" y="0.00" width="5.28" height="5.30" fill="#b0cbec"/><rect x="94.59" y="0.00" width="5.28" height="5.30" fill="#b0cbec"/><rect x="99.57" y="0.00" width="5.28" height="5.30" fill="#b0cbec"/><rect x="104.54" y="0.00" width="5.28" height="5.30" fill="#b0cbec"/><rect x="109.52" y="0.00" width="5.28" height="5.30" fill="#b0cbec"/><rect x="0.00" y="5.00" width="5.28" height="5.30" fill="#b4c6e0"/><rect x="4.98" y="5.00" width="5.28" height="5.30" fill="#b4c6e0"/><rect x="9.96" y="5.00" width="5.28" height="5.30" fill="#b4c6e0"/><rect x="14.93" y="5.00" width="5.28" height="5.30" fill="#b4c6e0"/><rect x="19.91" y="5.00" width="5.28" height="5.30" fill="#9ab4dc"/><rect x="24.89" y="5.00" width="5.28" height="5.30" fill="#9ab4dc"/><rect x="29.87" y="5.00" width="5.28" height="5.30" fill="#9ab4dc"/><rect x="34.85" y="5.00" width="5.28" height="5.30" fill="#9ab4dc"/><rect x="39.83" y="5.00" width="5.28" height="5.30" fill="#b4c6e0"/><rect x="44.80" y="5.00" width="5.28" height="5.30" fill="#b4c6e0"/><rect x="49.78" y="5.00" width="5.28" height="5.30" fill="#b4c6e0"/><rect x="54.76" y="5.00" width="5.28" height="5.30" fill="#b4c6e0"/><rect x="59.74" y="5.00" width="5.28" height="5.30" fill="#b4c6e0"/><rect x="64.72" y="5.00" width="5.28" height="5.30" fill="#b4c6e0"/><rect x="69.70" y="5.00" width="5.28" height="5.30" fill="#9ab4dc"/><rect x="74.67" y="5.00" width="5.28" height="5.30" fill="#9ab4dc"/><rect x="79.65" y="5.00" width="5.28" height="5.30" fill="#b4c6e0"/><rect x="84.63" y="5.00" width="5.28" height="5.30" fill="#b4c6e0"/><rect x="89.61" y="5.00" width="5.28" height="5.30" fill="#b4c6e0"/><rect x="94.59" y="5.00" width="5.28" height="5.30" fill="#b4c6e0"/><rect x="99.57" y="5.00" width="5.28" height="5.30" fill="#b4c6e0"/><rect x="104.54" y="5.00" width="5.28" height="5.30" fill="#b4c6e0"/><rect x="109.52" y="5.00" width="5.28" height="5.30" fill="#b4c6e0"/><rect x="0.00" y="10.00" width="5.28" height="5.30" fill="#729cd0"/><rect x="4.98" y="10.00" width="5.28" height="5.30" fill="#729cd0"/><rect x="9.96" y="10.00" width="5.28" height="5.30" fill="#729cd0"/><rect x="14.93" y="10.00" width="5.28" height="5.30" fill="#729cd0"/><rect x="19.91" y="10.00" width="5.28" height="5.30" fill="#729cd0"/><rect x="24.89" y="10.00" width="5.28" height="5.30" fill="#729cd0"/><rect x="29.87" y="10.00" width="5.28" height="5.30" fill="#729cd0"/><rect x="34.85" y="10.00" width="5.28" height="5.30" fill="#729cd0"/><rect x="39.83" y="10.00" width="5.28" height="5.30" fill="#729cd0"/><rect x="44.80" y="10.00" width="5.28" height="5.30" fill="#729cd0"/><rect x="49.78" y="10.00" width="5.28" height="5.30" fill="#729cd0"/><rect x="54.76" y="10.00" width="5.28" height="5.30" fill="#729cd0"/><rect x="59.74" y="10.00" width="5.28" height="5.30" fill="#729cd0"/><rect x="64.72" y="10.00" width="5.28" height="5.30" fill="#729cd0"/><rect x="69.70" y="10.00" width="5.28" height="5.30" fill="#729cd0"/><rect x="74.67" y="10.00" width="5.28" height="5.30" fill="#729cd0"/><rect x="79.65" y="10.00" width="5.28" height="5.30" fill="#729cd0"/><rect x="84.63" y="10.00" width="5.28" height="5.30" fill="#729cd0"/><rect x="89.61" y="10.00" width="5.28" height="5.30" fill="#729cd0"/><rect x="94.59" y="10.00" width="5.28" height="5.30" fill="#729cd0"/><rect x="99.57" y="10.00" width="5.28" height="5.30" fill="#729cd0"/><rect x="104.54" y="10.00" width="5.28" height="5.30" fill="#3e6a2e"/><rect x="109.52" y="10.00" width="5.28" height="5.30" fill="#3e6a2e"/><rect x="0.00" y="15.00" width="5.28" height="5.30" fill="#5b92b9"/><rect x="4.98" y="15.00" width="5.28" height="5.30" fill="#5b92b9"/><rect x="9.96" y="15.00" width="5.28" height="5.30" fill="#5b92b9"/><rect x="14.93" y="15.00" width="5.28" height="5.30" fill="#5b92b9"/><rect x="19.91" y="15.00" width="5.28" height="5.30" fill="#5b92b9"/><rect x="24.89" y="15.00" width="5.28" height="5.30" fill="#5b92b9"/><rect x="29.87" y="15.00" width="5.28" height="5.30" fill="#5b92b9"/><rect x="34.85" y="15.00" width="5.28" height="5.30" fill="#5b92b9"/><rect x="39.83" y="15.00" width="5.28" height="5.30" fill="#5b92b9"/><rect x="44.80" y="15.00" width="5.28" height="5.30" fill="#5b92b9"/><rect x="49.78" y="15.00" width="5.28" height="5.30" fill="#5b92b9"/><rect x="54.76" y="15.00" width="5.28" height="5.30" fill="#5b92b9"/><rect x="59.74" y="15.00" width="5.28" height="5.30" fill="#5b92b9"/><rect x="64.72" y="15.00" width="5.28" height="5.30" fill="#5b92b9"/><rect x="69.70" y="15.00" width="5.28" height="5.30" fill="#5b92b9"/><rect x="74.67" y="15.00" width="5.28" height="5.30" fill="#5b92b9"/><rect x="79.65" y="15.00" width="5.28" height="5.30" fill="#5b92b9"/><rect x="84.63" y="15.00" width="5.28" height="5.30" fill="#5b92b9"/><rect x="89.61" y="15.00" width="5.28" height="5.30" fill="#4a7a36"/><rect x="94.59" y="15.00" width="5.28" height="5.30" fill="#4a7a36"/><rect x="99.57" y="15.00" width="5.28" height="5.30" fill="#3e6a2e"/><rect x="104.54" y="15.00" width="5.28" height="5.30" fill="#3e6a2e"/><rect x="109.52" y="15.00" width="5.28" height="5.30" fill="#3e6a2e"/><rect x="0.00" y="20.00" width="5.28" height="5.30" fill="#4f8cad"/><rect x="4.98" y="20.00" width="5.28" height="5.30" fill="#4f8cad"/><rect x="9.96" y="20.00" width="5.28" height="5.30" fill="#4f8cad"/><rect x="14.93" y="20.00" width="5.28" height="5.30" fill="#4f8cad"/><rect x="19.91" y="20.00" width="5.28" height="5.30" fill="#4f8cad"/><rect x="24.89" y="20.00" width="5.28" height="5.30" fill="#4f8cad"/><rect x="29.87" y="20.00" width="5.28" height="5.30" fill="#4f8cad"/><rect x="34.85" y="20.00" width="5.28" height="5.30" fill="#4f8cad"/><rect x="39.83" y="20.00" width="5.28" height="5.30" fill="#4f8cad"/><rect x="44.80" y="20.00" width="5.28" height="5.30" fill="#4f8cad"/><rect x="49.78" y="20.00" width="5.28" height="5.30" fill="#4f8cad"/><rect x="54.76" y="20.00" width="5.28" height="5.30" fill="#4f8cad"/><rect x="59.74" y="20.00" width="5.28" height="5.30" fill="#4f8cad"/><rect x="64.72" y="20.00" width="5.28" height="5.30" fill="#4f8cad"/><rect x="69.70" y="20.00" width="5.28" height="5.30" fill="#4f8cad"/><rect x="74.67" y="20.00" width="5.28" height="5.30" fill="#4f8cad"/><rect x="79.65" y="20.00" width="5.28" height="5.30" fill="#4a7a36"/><rect x="84.63" y="20.00" width="5.28" height="5.30" fill="#4a7a36"/><rect x="89.61" y="20.00" width="5.28" height="5.30" fill="#4a7a36"/><rect x="94.59" y="20.00" width="5.28" height="5.30" fill="#4a7a36"/><rect x="99.57" y="20.00" width="5.28" height="5.30" fill="#4a7a36"/><rect x="104.54" y="20.00" width="5.28" height="5.30" fill="#3e6a2e"/><rect x="109.52" y="20.00" width="5.28" height="5.30" fill="#3e6a2e"/><rect x="0.00" y="25.00" width="5.28" height="5.30" fill="#6a8a42"/><rect x="4.98" y="25.00" width="5.28" height="5.30" fill="#6a8a42"/><rect x="9.96" y="25.00" width="5.28" height="5.30" fill="#6a8a42"/><rect x="14.93" y="25.00" width="5.28" height="5.30" fill="#4f8cad"/><rect x="19.91" y="25.00" width="5.28" height="5.30" fill="#58a2b2"/><rect x="24.89" y="25.00" width="5.28" height="5.30" fill="#58a2b2"/><rect x="29.87" y="25.00" width="5.28" height="5.30" fill="#58a2b2"/><rect x="34.85" y="25.00" width="5.28" height="5.30" fill="#58a2b2"/><rect x="39.83" y="25.00" width="5.28" height="5.30" fill="#58a2b2"/><rect x="44.80" y="25.00" width="5.28" height="5.30" fill="#58a2b2"/><rect x="49.78" y="25.00" width="5.28" height="5.30" fill="#58a2b2"/><rect x="54.76" y="25.00" width="5.28" height="5.30" fill="#58a2b2"/><rect x="59.74" y="25.00" width="5.28" height="5.30" fill="#58a2b2"/><rect x="64.72" y="25.00" width="5.28" height="5.30" fill="#58a2b2"/><rect x="69.70" y="25.00" width="5.28" height="5.30" fill="#58a2b2"/><rect x="74.67" y="25.00" width="5.28" height="5.30" fill="#4a7a36"/><rect x="79.65" y="25.00" width="5.28" height="5.30" fill="#4a7a36"/><rect x="84.63" y="25.00" width="5.28" height="5.30" fill="#4a7a36"/><rect x="89.61" y="25.00" width="5.28" height="5.30" fill="#4a7a36"/><rect x="94.59" y="25.00" width="5.28" height="5.30" fill="#3e6a2e"/><rect x="99.57" y="25.00" width="5.28" height="5.30" fill="#3e6a2e"/><rect x="104.54" y="25.00" width="5.28" height="5.30" fill="#3e6a2e"/><rect x="109.52" y="25.00" width="5.28" height="5.30" fill="#3f5b23"/><rect x="0.00" y="30.00" width="5.28" height="5.30" fill="#5e7a30"/><rect x="4.98" y="30.00" width="5.28" height="5.30" fill="#5e7a30"/><rect x="9.96" y="30.00" width="5.28" height="5.30" fill="#5e7a30"/><rect x="14.93" y="30.00" width="5.28" height="5.30" fill="#5e7a30"/><rect x="19.91" y="30.00" width="5.28" height="5.30" fill="#5e7a30"/><rect x="24.89" y="30.00" width="5.28" height="5.30" fill="#5e7a30"/><rect x="29.87" y="30.00" width="5.28" height="5.30" fill="#5e7a30"/><rect x="34.85" y="30.00" width="5.28" height="5.30" fill="#5e7a30"/><rect x="39.83" y="30.00" width="5.28" height="5.30" fill="#5e7a30"/><rect x="44.80" y="30.00" width="5.28" height="5.30" fill="#5e7a30"/><rect x="49.78" y="30.00" width="5.28" height="5.30" fill="#5e7a30"/><rect x="54.76" y="30.00" width="5.28" height="5.30" fill="#58a2b2"/><rect x="59.74" y="30.00" width="5.28" height="5.30" fill="#58a2b2"/><rect x="64.72" y="30.00" width="5.28" height="5.30" fill="#58a2b2"/><rect x="69.70" y="30.00" width="5.28" height="5.30" fill="#58a2b2"/><rect x="74.67" y="30.00" width="5.28" height="5.30" fill="#3e6a2e"/><rect x="79.65" y="30.00" width="5.28" height="5.30" fill="#3e6a2e"/><rect x="84.63" y="30.00" width="5.28" height="5.30" fill="#3e6a2e"/><rect x="89.61" y="30.00" width="5.28" height="5.30" fill="#3e6a2e"/><rect x="94.59" y="30.00" width="5.28" height="5.30" fill="#3f5b23"/><rect x="99.57" y="30.00" width="5.28" height="5.30" fill="#3f5b23"/><rect x="104.54" y="30.00" width="5.28" height="5.30" fill="#3f5b23"/><rect x="109.52" y="30.00" width="5.28" height="5.30" fill="#3f5b23"/><rect x="0.00" y="35.00" width="5.28" height="5.30" fill="#3f5b23"/><rect x="4.98" y="35.00" width="5.28" height="5.30" fill="#3f5b23"/><rect x="9.96" y="35.00" width="5.28" height="5.30" fill="#3f5b23"/><rect x="14.93" y="35.00" width="5.28" height="5.30" fill="#3f5b23"/><rect x="19.91" y="35.00" width="5.28" height="5.30" fill="#3f5b23"/><rect x="24.89" y="35.00" width="5.28" height="5.30" fill="#3f5b23"/><rect x="29.87" y="35.00" width="5.28" height="5.30" fill="#3f5b23"/><rect x="34.85" y="35.00" width="5.28" height="5.30" fill="#3f5b23"/><rect x="39.83" y="35.00" width="5.28" height="5.30" fill="#3f5b23"/><rect x="44.80" y="35.00" width="5.28" height="5.30" fill="#3f5b23"/><rect x="49.78" y="35.00" width="5.28" height="5.30" fill="#3f5b23"/><rect x="54.76" y="35.00" width="5.28" height="5.30" fill="#3f5b23"/><rect x="59.74" y="35.00" width="5.28" height="5.30" fill="#3f5b23"/><rect x="64.72" y="35.00" width="5.28" height="5.30" fill="#3f5b23"/><rect x="69.70" y="35.00" width="5.28" height="5.30" fill="#3f5b23"/><rect x="74.67" y="35.00" width="5.28" height="5.30" fill="#3f5b23"/><rect x="79.65" y="35.00" width="5.28" height="5.30" fill="#3f5b23"/><rect x="84.63" y="35.00" width="5.28" height="5.30" fill="#3f5b23"/><rect x="89.61" y="35.00" width="5.28" height="5.30" fill="#3f5b23"/><rect x="94.59" y="35.00" width="5.28" height="5.30" fill="#232b1b"/><rect x="99.57" y="35.00" width="5.28" height="5.30" fill="#232b1b"/><rect x="104.54" y="35.00" width="5.28" height="5.30" fill="#232b1b"/><rect x="109.52" y="35.00" width="5.28" height="5.30" fill="#3f5b23"/></svg>
<div class="a" style="left:990.2px;top:386.5px;width:123.00px;height:22.30px;background:#f75444;border-radius:3px"></div>
<svg style="left:1047.2px;top:392px" width="8.5" height="10.5" viewBox="0 0 8.5 10.5"><path d="M2.55 2 L3.06 0.3 L5.44 0.3 L5.95 2" fill="none" stroke="#fff" stroke-width="1.1"/><rect x="0" y="1.9" width="8.5" height="1.6" fill="#fff"/><path d="M1 3.5 L7.5 3.5 L7.5 9.5 Q7.5 10.5 6.5 10.5 L2 10.5 Q1 10.5 1 9.5 Z" fill="#fff"/><rect x="2.43" y="5" width="0.9" height="4.00" fill="#f75444"/><rect x="3.80" y="5" width="0.9" height="4.00" fill="#f75444"/><rect x="5.17" y="5" width="0.9" height="4.00" fill="#f75444"/></svg>
<div class="a" style="left:1124px;top:320px;width:123.00px;height:55.50px;background:#fff;border:1px solid #e6e6e6;border-radius:3px;box-shadow:0 1px 2px rgba(0,0,0,.06)"></div>
<svg style="left:1128px;top:330.5px;filter:blur(0.4px)" width="114.50" height="40.00" shape-rendering="crispEdges"><rect x="0.00" y="0.00" width="5.28" height="5.30" fill="#6b7b79"/><rect x="4.98" y="0.00" width="5.28" height="5.30" fill="#6b7b79"/><rect x="9.96" y="0.00" width="5.28" height="5.30" fill="#6b7b79"/><rect x="14.93" y="0.00" width="5.28" height="5.30" fill="#6b7b79"/><rect x="19.91" y="0.00" width="5.28" height="5.30" fill="#6b7b79"/><rect x="24.89" y="0.00" width="5.28" height="5.30" fill="#8db1e1"/><rect x="29.87" y="0.00" width="5.28" height="5.30" fill="#8db1e1"/><rect x="34.85" y="0.00" width="5.28" height="5.30" fill="#8db1e1"/><rect x="39.83" y="0.00" width="5.28" height="5.30" fill="#8db1e1"/><rect x="44.80" y="0.00" width="5.28" height="5.30" fill="#8db1e1"/><rect x="49.78" y="0.00" width="5.28" height="5.30" fill="#8db1e1"/><rect x="54.76" y="0.00" width="5.28" height="5.30" fill="#1f2a3e"/><rect x="59.74" y="0.00" width="5.28" height="5.30" fill="#6b7b79"/><rect x="64.72" y="0.00" width="5.28" height="5.30" fill="#6b7b79"/><rect x="69.70" y="0.00" width="5.28" height="5.30" fill="#6b7b79"/><rect x="74.67" y="0.00" width="5.28" height="5.30" fill="#6b7b79"/><rect x="79.65" y="0.00" width="5.28" height="5.30" fill="#687a68"/><rect x="84.63" y="0.00" width="5.28" height="5.30" fill="#687a68"/><rect x="89.61" y="0.00" width="5.28" height="5.30" fill="#6b7b79"/><rect x="94.59" y="0.00" width="5.28" height="5.30" fill="#6b7b79"/><rect x="99.57" y="0.00" width="5.28" height="5.30" fill="#6b7b79"/><rect x="104.54" y="0.00" width="5.28" height="5.30" fill="#6b7b79"/><rect x="109.52" y="0.00" width="5.28" height="5.30" fill="#6b7b79"/><rect x="0.00" y="5.00" width="5.28" height="5.30" fill="#50625a"/><rect x="4.98" y="5.00" width="5.28" height="5.30" fill="#50625a"/><rect x="9.96" y="5.00" width="5.28" height="5.30" fill="#50625a"/><rect x="14.93" y="5.00" width="5.28" height="5.30" fill="#50625a"/><rect x="19.91" y="5.00" width="5.28" height="5.30" fill="#4a90c0"/><rect x="24.89" y="5.00" width="5.28" height="5.30" fill="#4a90c0"/><rect x="29.87" y="5.00" width="5.28" height="5.30" fill="#4a90c0"/><rect x="34.85" y="5.00" width="5.28" height="5.30" fill="#4a90c0"/><rect x="39.83" y="5.00" width="5.28" height="5.30" fill="#4a90c0"/><rect x="44.80" y="5.00" width="5.28" height="5.30" fill="#4a90c0"/><rect x="49.78" y="5.00" width="5.28" height="5.30" fill="#1f2a3e"/><rect x="54.76" y="5.00" width="5.28" height="5.30" fill="#4a90c0"/><rect x="59.74" y="5.00" width="5.28" height="5.30" fill="#4a90c0"/><rect x="64.72" y="5.00" width="5.28" height="5.30" fill="#6b7b79"/><rect x="69.70" y="5.00" width="5.28" height="5.30" fill="#6b7b79"/><rect x="74.67" y="5.00" width="5.28" height="5.30" fill="#687a68"/><rect x="79.65" y="5.00" width="5.28" height="5.30" fill="#687a68"/><rect x="84.63" y="5.00" width="5.28" height="5.30" fill="#6b7b79"/><rect x="89.61" y="5.00" width="5.28" height="5.30" fill="#a4aca8"/><rect x="94.59" y="5.00" width="5.28" height="5.30" fill="#a4aca8"/><rect x="99.57" y="5.00" width="5.28" height="5.30" fill="#6b7b79"/><rect x="104.54" y="5.00" width="5.28" height="5.30" fill="#6b7b79"/><rect x="109.52" y="5.00" width="5.28" height="5.30" fill="#6b7b79"/><rect x="0.00" y="10.00" width="5.28" height="5.30" fill="#5a6a58"/><rect x="4.98" y="10.00" width="5.28" height="5.30" fill="#5a6a58"/><rect x="9.96" y="10.00" width="5.28" height="5.30" fill="#50625a"/><rect x="14.93" y="10.00" width="5.28" height="5.30" fill="#5a6a58"/><rect x="19.91" y="10.00" width="5.28" height="5.30" fill="#3f8aa8"/><rect x="24.89" y="10.00" width="5.28" height="5.30" fill="#3f8aa8"/><rect x="29.87" y="10.00" width="5.28" height="5.30" fill="#4a90c0"/><rect x="34.85" y="10.00" width="5.28" height="5.30" fill="#4a90c0"/><rect x="39.83" y="10.00" width="5.28" height="5.30" fill="#687a68"/><rect x="44.80" y="10.00" width="5.28" height="5.30" fill="#687a68"/><rect x="49.78" y="10.00" width="5.28" height="5.30" fill="#687a68"/><rect x="54.76" y="10.00" width="5.28" height="5.30" fill="#1f2a3e"/><rect x="59.74" y="10.00" width="5.28" height="5.30" fill="#c39585"/><rect x="64.72" y="10.00" width="5.28" height="5.30" fill="#c39585"/><rect x="69.70" y="10.00" width="5.28" height="5.30" fill="#687a68"/><rect x="74.67" y="10.00" width="5.28" height="5.30" fill="#687a68"/><rect x="79.65" y="10.00" width="5.28" height="5.30" fill="#687a68"/><rect x="84.63" y="10.00" width="5.28" height="5.30" fill="#6b7b79"/><rect x="89.61" y="10.00" width="5.28" height="5.30" fill="#6b7b79"/><rect x="94.59" y="10.00" width="5.28" height="5.30" fill="#3c5a4e"/><rect x="99.57" y="10.00" width="5.28" height="5.30" fill="#3c5a4e"/><rect x="104.54" y="10.00" width="5.28" height="5.30" fill="#6b7b79"/><rect x="109.52" y="10.00" width="5.28" height="5.30" fill="#6b7b79"/><rect x="0.00" y="15.00" width="5.28" height="5.30" fill="#687a68"/><rect x="4.98" y="15.00" width="5.28" height="5.30" fill="#687a68"/><rect x="9.96" y="15.00" width="5.28" height="5.30" fill="#687a68"/><rect x="14.93" y="15.00" width="5.28" height="5.30" fill="#3c5a4e"/><rect x="19.91" y="15.00" width="5.28" height="5.30" fill="#3c5a4e"/><rect x="24.89" y="15.00" width="5.28" height="5.30" fill="#687a68"/><rect x="29.87" y="15.00" width="5.28" height="5.30" fill="#687a68"/><rect x="34.85" y="15.00" width="5.28" height="5.30" fill="#a4aca8"/><rect x="39.83" y="15.00" width="5.28" height="5.30" fill="#a4aca8"/><rect x="44.80" y="15.00" width="5.28" height="5.30" fill="#3f8aa8"/><rect x="49.78" y="15.00" width="5.28" height="5.30" fill="#3f8aa8"/><rect x="54.76" y="15.00" width="5.28" height="5.30" fill="#3f8aa8"/><rect x="59.74" y="15.00" width="5.28" height="5.30" fill="#c39585"/><rect x="64.72" y="15.00" width="5.28" height="5.30" fill="#687a68"/><rect x="69.70" y="15.00" width="5.28" height="5.30" fill="#3c5a4e"/><rect x="74.67" y="15.00" width="5.28" height="5.30" fill="#3c5a4e"/><rect x="79.65" y="15.00" width="5.28" height="5.30" fill="#687a68"/><rect x="84.63" y="15.00" width="5.28" height="5.30" fill="#a4aca8"/><rect x="89.61" y="15.00" width="5.28" height="5.30" fill="#687a68"/><rect x="94.59" y="15.00" width="5.28" height="5.30" fill="#687a68"/><rect x="99.57" y="15.00" width="5.28" height="5.30" fill="#687a68"/><rect x="104.54" y="15.00" width="5.28" height="5.30" fill="#6b7b79"/><rect x="109.52" y="15.00" width="5.28" height="5.30" fill="#6b7b79"/><rect x="0.00" y="20.00" width="5.28" height="5.30" fill="#707878"/><rect x="4.98" y="20.00" width="5.28" height="5.30" fill="#707878"/><rect x="9.96" y="20.00" width="5.28" height="5.30" fill="#707878"/><rect x="14.93" y="20.00" width="5.28" height="5.30" fill="#707878"/><rect x="19.91" y="20.00" width="5.28" height="5.30" fill="#707878"/><rect x="24.89" y="20.00" width="5.28" height="5.30" fill="#687a68"/><rect x="29.87" y="20.00" width="5.28" height="5.30" fill="#687a68"/><rect x="34.85" y="20.00" width="5.28" height="5.30" fill="#687a68"/><rect x="39.83" y="20.00" width="5.28" height="5.30" fill="#687a68"/><rect x="44.80" y="20.00" width="5.28" height="5.30" fill="#2b79b0"/><rect x="49.78" y="20.00" width="5.28" height="5.30" fill="#2b79b0"/><rect x="54.76" y="20.00" width="5.28" height="5.30" fill="#2b79b0"/><rect x="59.74" y="20.00" width="5.28" height="5.30" fill="#2b79b0"/><rect x="64.72" y="20.00" width="5.28" height="5.30" fill="#687a68"/><rect x="69.70" y="20.00" width="5.28" height="5.30" fill="#3c5a4e"/><rect x="74.67" y="20.00" width="5.28" height="5.30" fill="#3c5a4e"/><rect x="79.65" y="20.00" width="5.28" height="5.30" fill="#707878"/><rect x="84.63" y="20.00" width="5.28" height="5.30" fill="#707878"/><rect x="89.61" y="20.00" width="5.28" height="5.30" fill="#707878"/><rect x="94.59" y="20.00" width="5.28" height="5.30" fill="#707878"/><rect x="99.57" y="20.00" width="5.28" height="5.30" fill="#707878"/><rect x="104.54" y="20.00" width="5.28" height="5.30" fill="#707878"/><rect x="109.52" y="20.00" width="5.28" height="5.30" fill="#707878"/><rect x="0.00" y="25.00" width="5.28" height="5.30" fill="#4b4a52"/><rect x="4.98" y="25.00" width="5.28" height="5.30" fill="#4b4a52"/><rect x="9.96" y="25.00" width="5.28" height="5.30" fill="#4b4a52"/><rect x="14.93" y="25.00" width="5.28" height="5.30" fill="#4b4a52"/><rect x="19.91" y="25.00" width="5.28" height="5.30" fill="#4b4a52"/><rect x="24.89" y="25.00" width="5.28" height="5.30" fill="#4b4a52"/><rect x="29.87" y="25.00" width="5.28" height="5.30" fill="#4b4a52"/><rect x="34.85" y="25.00" width="5.28" height="5.30" fill="#4b4a52"/><rect x="39.83" y="25.00" width="5.28" height="5.30" fill="#4b4a52"/><rect x="44.80" y="25.00" width="5.28" height="5.30" fill="#4b4a52"/><rect x="49.78" y="25.00" width="5.28" height="5.30" fill="#2b79b0"/><rect x="54.76" y="25.00" width="5.28" height="5.30" fill="#2b79b0"/><rect x="59.74" y="25.00" width="5.28" height="5.30" fill="#4b4a52"/><rect x="64.72" y="25.00" width="5.28" height="5.30" fill="#4b4a52"/><rect x="69.70" y="25.00" width="5.28" height="5.30" fill="#4b4a52"/><rect x="74.67" y="25.00" width="5.28" height="5.30" fill="#4b4a52"/><rect x="79.65" y="25.00" width="5.28" height="5.30" fill="#4b4a52"/><rect x="84.63" y="25.00" width="5.28" height="5.30" fill="#4b4a52"/><rect x="89.61" y="25.00" width="5.28" height="5.30" fill="#4b4a52"/><rect x="94.59" y="25.00" width="5.28" height="5.30" fill="#4b4a52"/><rect x="99.57" y="25.00" width="5.28" height="5.30" fill="#4b4a52"/><rect x="104.54" y="25.00" width="5.28" height="5.30" fill="#4b4a52"/><rect x="109.52" y="25.00" width="5.28" height="5.30" fill="#4b4a52"/><rect x="0.00" y="30.00" width="5.28" height="5.30" fill="#707878"/><rect x="4.98" y="30.00" width="5.28" height="5.30" fill="#707878"/><rect x="9.96" y="30.00" width="5.28" height="5.30" fill="#707878"/><rect x="14.93" y="30.00" width="5.28" height="5.30" fill="#2a2230"/><rect x="19.91" y="30.00" width="5.28" height="5.30" fill="#707878"/><rect x="24.89" y="30.00" width="5.28" height="5.30" fill="#40a8b8"/><rect x="29.87" y="30.00" width="5.28" height="5.30" fill="#40a8b8"/><rect x="34.85" y="30.00" width="5.28" height="5.30" fill="#40a8b8"/><rect x="39.83" y="30.00" width="5.28" height="5.30" fill="#707878"/><rect x="44.80" y="30.00" width="5.28" height="5.30" fill="#707878"/><rect x="49.78" y="30.00" width="5.28" height="5.30" fill="#2a2230"/><rect x="54.76" y="30.00" width="5.28" height="5.30" fill="#1f2a3e"/><rect x="59.74" y="30.00" width="5.28" height="5.30" fill="#707878"/><rect x="64.72" y="30.00" width="5.28" height="5.30" fill="#40a8b8"/><rect x="69.70" y="30.00" width="5.28" height="5.30" fill="#40a8b8"/><rect x="74.67" y="30.00" width="5.28" height="5.30" fill="#40a8b8"/><rect x="79.65" y="30.00" width="5.28" height="5.30" fill="#40a8b8"/><rect x="84.63" y="30.00" width="5.28" height="5.30" fill="#40a8b8"/><rect x="89.61" y="30.00" width="5.28" height="5.30" fill="#40a8b8"/><rect x="94.59" y="30.00" width="5.28" height="5.30" fill="#40a8b8"/><rect x="99.57" y="30.00" width="5.28" height="5.30" fill="#40a8b8"/><rect x="104.54" y="30.00" width="5.28" height="5.30" fill="#40a8b8"/><rect x="109.52" y="30.00" width="5.28" height="5.30" fill="#40a8b8"/><rect x="0.00" y="35.00" width="5.28" height="5.30" fill="#707878"/><rect x="4.98" y="35.00" width="5.28" height="5.30" fill="#707878"/><rect x="9.96" y="35.00" width="5.28" height="5.30" fill="#707878"/><rect x="14.93" y="35.00" width="5.28" height="5.30" fill="#2a2230"/><rect x="19.91" y="35.00" width="5.28" height="5.30" fill="#707878"/><rect x="24.89" y="35.00" width="5.28" height="5.30" fill="#4cc0c8"/><rect x="29.87" y="35.00" width="5.28" height="5.30" fill="#4cc0c8"/><rect x="34.85" y="35.00" width="5.28" height="5.30" fill="#4cc0c8"/><rect x="39.83" y="35.00" width="5.28" height="5.30" fill="#707878"/><rect x="44.80" y="35.00" width="5.28" height="5.30" fill="#707878"/><rect x="49.78" y="35.00" width="5.28" height="5.30" fill="#2a2230"/><rect x="54.76" y="35.00" width="5.28" height="5.30" fill="#2a2230"/><rect x="59.74" y="35.00" width="5.28" height="5.30" fill="#40a8b8"/><rect x="64.72" y="35.00" width="5.28" height="5.30" fill="#4cc0c8"/><rect x="69.70" y="35.00" width="5.28" height="5.30" fill="#9fd4da"/><rect x="74.67" y="35.00" width="5.28" height="5.30" fill="#9fd4da"/><rect x="79.65" y="35.00" width="5.28" height="5.30" fill="#4cc0c8"/><rect x="84.63" y="35.00" width="5.28" height="5.30" fill="#4cc0c8"/><rect x="89.61" y="35.00" width="5.28" height="5.30" fill="#4cc0c8"/><rect x="94.59" y="35.00" width="5.28" height="5.30" fill="#4cc0c8"/><rect x="99.57" y="35.00" width="5.28" height="5.30" fill="#4cc0c8"/><rect x="104.54" y="35.00" width="5.28" height="5.30" fill="#4cc0c8"/><rect x="109.52" y="35.00" width="5.28" height="5.30" fill="#4cc0c8"/></svg>
<div class="a" style="left:1124px;top:386.5px;width:123.00px;height:22.30px;background:#f75444;border-radius:3px"></div>
<svg style="left:1181px;top:392px" width="8.5" height="10.5" viewBox="0 0 8.5 10.5"><path d="M2.55 2 L3.06 0.3 L5.44 0.3 L5.95 2" fill="none" stroke="#fff" stroke-width="1.1"/><rect x="0" y="1.9" width="8.5" height="1.6" fill="#fff"/><path d="M1 3.5 L7.5 3.5 L7.5 9.5 Q7.5 10.5 6.5 10.5 L2 10.5 Q1 10.5 1 9.5 Z" fill="#fff"/><rect x="2.43" y="5" width="0.9" height="4.00" fill="#f75444"/><rect x="3.80" y="5" width="0.9" height="4.00" fill="#f75444"/><rect x="5.17" y="5" width="0.9" height="4.00" fill="#f75444"/></svg>
<div class="a" style="left:701px;top:283px;width:835.00px;height:47.00px;background:#2c3e50;border-radius:2px 2px 0 0"></div>
<div class="t" style="left:722.5px;top:299.1px;font-size:14.5px;line-height:17px;color:#fff;font-weight:normal;">编辑</div>
<div class="a" style="left:1453px;top:308.5px;width:12.00px;height:1.50px;background:#fff"></div>
<svg style="left:1480px;top:301.5px" width="14" height="11" viewBox="0 0 14 11"><rect x="0.6" y="3.6" width="10" height="6.8" fill="none" stroke="#e6e9ec" stroke-width="1.1"/><path d="M3 3.6 L3 0.6 L13.4 0.6 L13.4 7.6 L10.6 7.6" fill="none" stroke="#e6e9ec" stroke-width="1.1"/></svg>
<svg style="left:1509px;top:303px" width="9" height="8.5" viewBox="0 0 9 8.5"><path d="M0.5 0.5 L8.5 8 M8.5 0.5 L0.5 8" stroke="#e6e9ec" stroke-width="1.1"/></svg>
<div class="t" style="left:524.5px;width:300px;text-align:right;top:436.6px;font-size:14px;line-height:17px;color:#333;font-weight:normal">儿童打折:</div>
<div class="a" style="left:856px;top:425.5px;width:525.00px;height:34.00px;background:#fff;border:1px solid #d4d4d4"></div>
<div class="t" style="left:869px;top:434.6px;font-size:14px;line-height:17px;color:#333;font-weight:normal;">1</div>
<div class="a" style="left:1349px;top:432.5px;width:18.50px;height:18.50px;background:#ececf0;border-radius:2px"></div>
<svg style="left:1353px;top:435.0px" width="10" height="14" viewBox="0 0 10 14"><path d="M1.5 5 L5 1.5 L8.5 5 M1.5 9 L5 12.5 L8.5 9" fill="none" stroke="#6f6f6f" stroke-width="1.3"/></svg>
<div class="t" style="left:524.5px;width:300px;text-align:right;top:486.6px;font-size:14px;line-height:17px;color:#333;font-weight:normal">报名截止天数:</div>
<div class="a" style="left:856px;top:475.5px;width:525.00px;height:34.00px;background:#fff;border:1px solid #d4d4d4"></div>
<div class="t" style="left:869px;top:484.6px;font-size:14px;line-height:17px;color:#333;font-weight:normal;">3</div>
<div class="a" style="left:1349px;top:482.5px;width:18.50px;height:18.50px;background:#ececf0;border-radius:2px"></div>
<svg style="left:1353px;top:485.0px" width="10" height="14" viewBox="0 0 10 14"><path d="M1.5 5 L5 1.5 L8.5 5 M1.5 9 L5 12.5 L8.5 9" fill="none" stroke="#6f6f6f" stroke-width="1.3"/></svg>
<div class="t" style="left:524.5px;width:300px;text-align:right;top:536.6px;font-size:14px;line-height:17px;color:#333;font-weight:normal">线路天数:</div>
<div class="a" style="left:856px;top:525.5px;width:525.00px;height:34.00px;background:#fff;border:1px solid #d4d4d4"></div>
<div class="t" style="left:869px;top:534.6px;font-size:14px;line-height:17px;color:#333;font-weight:normal;">10</div>
<div class="a" style="left:1349px;top:532.5px;width:18.50px;height:18.50px;background:#ececf0;border-radius:2px"></div>
<svg style="left:1353px;top:535.0px" width="10" height="14" viewBox="0 0 10 14"><path d="M1.5 5 L5 1.5 L8.5 5 M1.5 9 L5 12.5 L8.5 9" fill="none" stroke="#6f6f6f" stroke-width="1.3"/></svg>
<div class="t" style="left:524.5px;width:300px;text-align:right;top:586.6px;font-size:14px;line-height:17px;color:#333;font-weight:normal">团队人数:</div>
<div class="a" style="left:856px;top:575.5px;width:525.00px;height:34.00px;background:#fff;border:1px solid #d4d4d4"></div>
<div class="t" style="left:869px;top:584.6px;font-size:14px;line-height:17px;color:#333;font-weight:normal;">100</div>
<div class="a" style="left:1349px;top:582.5px;width:18.50px;height:18.50px;background:#ececf0;border-radius:2px"></div>
<svg style="left:1353px;top:585.0px" width="10" height="14" viewBox="0 0 10 14"><path d="M1.5 5 L5 1.5 L8.5 5 M1.5 9 L5 12.5 L8.5 9" fill="none" stroke="#6f6f6f" stroke-width="1.3"/></svg>
<div class="t" style="left:524.5px;width:300px;text-align:right;top:636.6px;font-size:14px;line-height:17px;color:#333;font-weight:normal">年龄说明:</div>
<div class="a" style="left:856px;top:625.5px;width:525.00px;height:34.00px;background:#fff;border:1px solid #d4d4d4"></div>
<div class="t" style="left:869px;top:634.6px;font-size:14px;line-height:17px;color:#333;font-weight:normal;">无</div>
<div class="t" style="left:524.5px;width:300px;text-align:right;top:686.6px;font-size:14px;line-height:17px;color:#333;font-weight:normal">集合城市:</div>
<div class="a" style="left:856px;top:675.5px;width:525.00px;height:34.00px;background:#fff;border:1px solid #d4d4d4"></div>
<div class="t" style="left:869px;top:684.6px;font-size:14px;line-height:17px;color:#333;font-weight:normal;">上海市</div>
<svg style="left:1344px;top:687.5px" width="10" height="10" viewBox="0 0 10 10"><path d="M0.7 0.7 L9.3 9.3 M9.3 0.7 L0.7 9.3" stroke="#444" stroke-width="1.4"/></svg>
<svg style="left:1361px;top:691.0px" width="7.5" height="4.5" viewBox="0 0 7.5 4.5"><path d="M0 0 L7.5 0 L3.75 4.5 Z" fill="#111"/></svg>
<div class="t" style="left:524.5px;width:300px;text-align:right;top:736.6px;font-size:14px;line-height:17px;color:#333;font-weight:normal">集合地址:</div>
<div class="a" style="left:856px;top:725.5px;width:525.00px;height:34.00px;background:#fff;border:1px solid #d4d4d4"></div>
<div class="t" style="left:869px;top:734.6px;font-size:14px;line-height:17px;color:#333;font-weight:normal;">厦门鼓浪屿</div>
<div class="t" style="left:524.5px;width:300px;text-align:right;top:786.6px;font-size:14px;line-height:17px;color:#333;font-weight:normal">目的地城市:</div>
<div class="a" style="left:856px;top:775.5px;width:525.00px;height:34.00px;background:#fff;border:1px solid #d4d4d4"></div>
<div class="t" style="left:869px;top:784.6px;font-size:14px;line-height:17px;color:#333;font-weight:normal;">丽水市</div>
<svg style="left:1344px;top:787.5px" width="10" height="10" viewBox="0 0 10 10"><path d="M0.7 0.7 L9.3 9.3 M9.3 0.7 L0.7 9.3" stroke="#444" stroke-width="1.4"/></svg>
<svg style="left:1361px;top:791.0px" width="7.5" height="4.5" viewBox="0 0 7.5 4.5"><path d="M0 0 L7.5 0 L3.75 4.5 Z" fill="#111"/></svg>
<div class="t" style="left:524.5px;width:300px;text-align:right;top:836.6px;font-size:14px;line-height:17px;color:#333;font-weight:normal">目的地地址:</div>
<div class="a" style="left:856px;top:825.5px;width:525.00px;height:34.00px;background:#fff;border:1px solid #d4d4d4"></div>
<div class="t" style="left:869px;top:834.6px;font-size:14px;line-height:17px;color:#333;font-weight:normal;">海南</div>
<div class="a" style="left:701px;top:854px;width:835.00px;height:46.00px;background:#ecf0f1"></div>
<div class="a" style="left:852.7px;top:864.6px;width:54.00px;height:33.40px;background:#444c69;border-radius:3px"></div>
<div class="t" style="left:866px;top:873.6px;font-size:14px;line-height:17px;color:#fff;font-weight:normal;">确定</div>
</body></html>
